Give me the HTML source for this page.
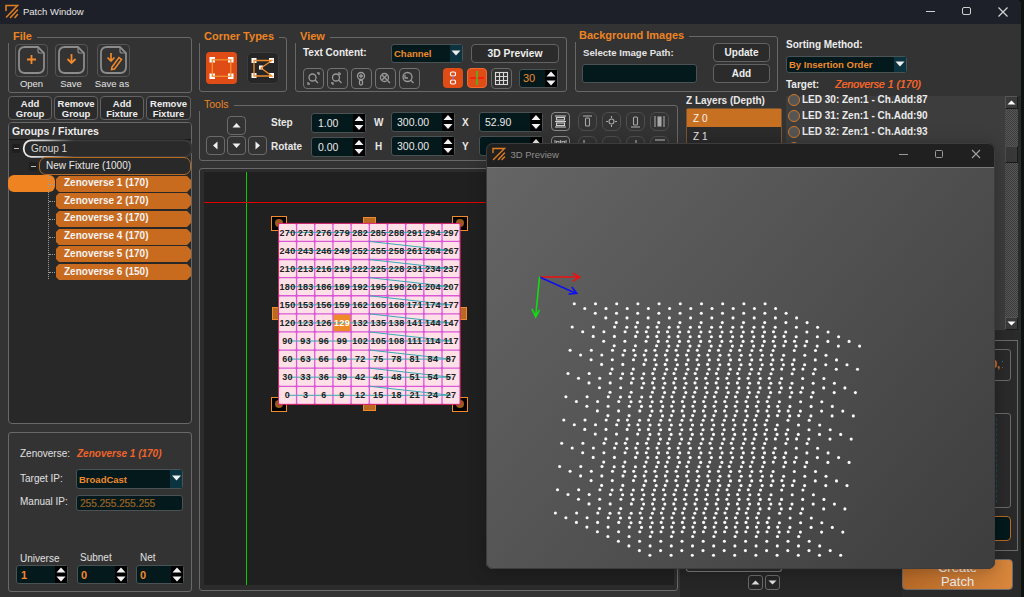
<!DOCTYPE html><html><head><meta charset="utf-8"><style>
html,body{margin:0;padding:0;width:1024px;height:597px;overflow:hidden;background:#0e1310;font-family:"Liberation Sans", sans-serif;}
.w{position:absolute;left:0;top:0;width:1021px;height:597px;background:#333;overflow:hidden;border-top-right-radius:5px;}
.lbl{font-weight:bold;color:#e8e8e8;font-size:11px;}
.gt{position:absolute;font-weight:bold;color:#ec8424;font-size:11px;background:#333;padding:0 5px;line-height:14px;}
.fr{position:absolute;border:1px solid #686868;border-radius:3px;box-sizing:border-box;}
.btn{position:absolute;box-sizing:border-box;border:1px solid #626262;border-radius:4px;background:#2b2b2b;color:#eee;font-weight:bold;font-size:9.5px;text-align:center;}
.inp{position:absolute;box-sizing:border-box;border:1px solid #4a5254;border-radius:3px;background:#03191c;}
</style></head><body>
<div class="w">
<div style="position:absolute;left:0px;top:0px;width:1021px;height:23.8px;background:#1e2029;"></div>
<svg style="position:absolute;left:0;top:0" width="30" height="24"><g stroke="#e07d22" stroke-width="1.6" fill="none" stroke-linecap="round"><path d="M6 10.5 V5.5 H17.5 L6.5 17"/><path d="M17.5 10 L10.5 17.5"/><path d="M17.5 14.5 L15 17.5"/></g></svg>
<div style="position:absolute;left:23px;top:6px;white-space:nowrap;color:#e6e6e6;font-size:9.5px;">Patch Window</div>
<div style="position:absolute;left:926px;top:11px;width:9px;height:1px;background:#d0d0d0;"></div>
<div style="position:absolute;left:962px;top:7px;width:9px;height:8px;border:1.3px solid #d0d0d0;border-radius:2px;box-sizing:border-box;"></div>
<svg style="position:absolute;left:997px;top:6px" width="12" height="12"><path d="M1.5 1.5 L10.5 10.5 M10.5 1.5 L1.5 10.5" stroke="#d6d6d6" stroke-width="1.2"/></svg>
<div class="fr" style="left:8px;top:37px;width:184px;height:56px;"></div>
<div class="gt" style="left:8px;top:29px;">File</div>
<div style="position:absolute;left:15px;top:44px;width:33px;height:33px;box-sizing:border-box;border:1px solid #555;border-radius:4px;"></div>
<svg style="position:absolute;left:15px;top:44px" width="33" height="33"><path d="M4 9 Q4 3 10 3 H23 L29 9 V23 Q29 29 23 29 H10 Q4 29 4 23 Z" stroke="#8c8c8c" stroke-width="1.8" fill="none"/><path d="M23 3 V7 Q23 9 25 9 H29" stroke="#8c8c8c" stroke-width="1.2" fill="none"/><path d="M16.5 11 V20 M12 15.5 H21" stroke="#f08a2c" stroke-width="1.8"/></svg>
<div style="position:absolute;left:-68.5px;width:200px;top:78px;text-align:center;white-space:nowrap;color:#e4e4e4;font-size:9.5px;">Open</div>
<div style="position:absolute;left:55px;top:44px;width:33px;height:33px;box-sizing:border-box;border:1px solid #555;border-radius:4px;"></div>
<svg style="position:absolute;left:55px;top:44px" width="33" height="33"><path d="M4 9 Q4 3 10 3 H23 L29 9 V23 Q29 29 23 29 H10 Q4 29 4 23 Z" stroke="#8c8c8c" stroke-width="1.8" fill="none"/><path d="M23 3 V7 Q23 9 25 9 H29" stroke="#8c8c8c" stroke-width="1.2" fill="none"/><path d="M16.5 10 V19 M12.5 15 L16.5 19 L20.5 15" stroke="#f08a2c" stroke-width="1.8" fill="none"/></svg>
<div style="position:absolute;left:-29px;width:200px;top:78px;text-align:center;white-space:nowrap;color:#e4e4e4;font-size:9.5px;">Save</div>
<div style="position:absolute;left:97px;top:44px;width:33px;height:33px;box-sizing:border-box;border:1px solid #555;border-radius:4px;"></div>
<svg style="position:absolute;left:97px;top:44px" width="33" height="33"><path d="M4 9 Q4 3 10 3 H23 L29 9 V23 Q29 29 23 29 H10 Q4 29 4 23 Z" stroke="#8c8c8c" stroke-width="1.8" fill="none"/><path d="M23 3 V7 Q23 9 25 9 H29" stroke="#8c8c8c" stroke-width="1.2" fill="none"/><path d="M14 9 V17 M10.5 13.5 L14 17 L17.5 13.5" stroke="#f08a2c" stroke-width="1.7" fill="none"/><path d="M15 23 L22 13.5 L24.5 15.5 L17.5 25 L14.5 25.5 Z" stroke="#f08a2c" stroke-width="1.5" fill="none"/></svg>
<div style="position:absolute;left:12px;width:200px;top:78px;text-align:center;white-space:nowrap;color:#e4e4e4;font-size:9.5px;">Save as</div>
<div class="btn" style="left:8px;top:96px;width:44px;height:24px;line-height:9.5px;padding-top:2px;">Add<br>Group</div>
<div class="btn" style="left:54px;top:96px;width:44px;height:24px;line-height:9.5px;padding-top:2px;">Remove<br>Group</div>
<div class="btn" style="left:100px;top:96px;width:44px;height:24px;line-height:9.5px;padding-top:2px;">Add<br>Fixture</div>
<div class="btn" style="left:146px;top:96px;width:45px;height:24px;line-height:9.5px;padding-top:2px;">Remove<br>Fixture</div>
<div style="position:absolute;left:8px;top:122px;width:184px;height:302px;box-sizing:border-box;border:1px solid #686868;border-radius:4px;background:#282828;overflow:hidden;">
<div style="position:absolute;left:0;top:0;width:184px;height:16px;background:#2f2f2f;border-bottom:1px solid #161616;"></div>
<div style="position:absolute;left:3px;top:2px;font-weight:bold;color:#ececec;font-size:10.5px;">Groups / Fixtures</div>
</div>
<div style="position:absolute;left:12px;top:144px;width:8px;height:9px;background:#1f1f1f;"></div>
<div style="position:absolute;left:14px;top:148px;width:5px;height:1px;background:#bdbdbd;"></div>
<svg style="position:absolute;left:22px;top:139px" width="170" height="19"><defs><linearGradient id="gg" x1="0" x2="1" y1="0" y2="0"><stop offset="0" stop-color="#ececec"/><stop offset="0.12" stop-color="#c8c8c8"/><stop offset="0.3" stop-color="#3c3c3c"/><stop offset="1" stop-color="#3a3a3a"/></linearGradient></defs><rect x="1.8" y="1.3" width="168" height="16.5" rx="7.5" fill="#2a2a2a" stroke="url(#gg)" stroke-width="1.8"/></svg>
<div style="position:absolute;left:31px;top:143px;white-space:nowrap;color:#d8d8d8;font-size:10px;">Group 1</div>
<div style="position:absolute;left:29px;top:162px;width:8px;height:9px;background:#1f1f1f;"></div>
<div style="position:absolute;left:31px;top:166px;width:5px;height:1px;background:#bdbdbd;"></div>
<div style="position:absolute;left:39px;top:157px;width:152px;height:18px;box-sizing:border-box;border:1.5px solid #b86a20;border-radius:7px;background:#292929;"></div>
<div style="position:absolute;left:46px;top:160px;white-space:nowrap;color:#e8e8e8;font-size:10px;">New Fixture (1000)</div>
<div style="position:absolute;left:8px;top:175px;width:47px;height:17px;background:#ef8322;border-radius:6px;"></div>
<div style="position:absolute;left:48px;top:175px;width:0;height:104px;border-left:1px dotted #9a9a9a;"></div>
<div style="position:absolute;left:49px;top:183.5px;width:6px;height:0;border-top:1px dotted #9a9a9a;"></div>
<svg style="position:absolute;left:56px;top:175.5px" width="135" height="16"><path d="M3 0 H131 L135 4 V12 L131 16 H3 L0 13 V3 Z" fill="#c96b1f"/></svg>
<div style="position:absolute;left:64px;top:177.0px;white-space:nowrap;color:#f4f4f4;font-size:10px;font-weight:bold;">Zenoverse 1 (170)</div>
<div style="position:absolute;left:49px;top:201.2px;width:6px;height:0;border-top:1px dotted #9a9a9a;"></div>
<svg style="position:absolute;left:56px;top:193.2px" width="135" height="16"><path d="M3 0 H131 L135 4 V12 L131 16 H3 L0 13 V3 Z" fill="#c96b1f"/></svg>
<div style="position:absolute;left:64px;top:194.7px;white-space:nowrap;color:#f4f4f4;font-size:10px;font-weight:bold;">Zenoverse 2 (170)</div>
<div style="position:absolute;left:49px;top:218.9px;width:6px;height:0;border-top:1px dotted #9a9a9a;"></div>
<svg style="position:absolute;left:56px;top:210.9px" width="135" height="16"><path d="M3 0 H131 L135 4 V12 L131 16 H3 L0 13 V3 Z" fill="#c96b1f"/></svg>
<div style="position:absolute;left:64px;top:212.4px;white-space:nowrap;color:#f4f4f4;font-size:10px;font-weight:bold;">Zenoverse 3 (170)</div>
<div style="position:absolute;left:49px;top:236.6px;width:6px;height:0;border-top:1px dotted #9a9a9a;"></div>
<svg style="position:absolute;left:56px;top:228.6px" width="135" height="16"><path d="M3 0 H131 L135 4 V12 L131 16 H3 L0 13 V3 Z" fill="#c96b1f"/></svg>
<div style="position:absolute;left:64px;top:230.1px;white-space:nowrap;color:#f4f4f4;font-size:10px;font-weight:bold;">Zenoverse 4 (170)</div>
<div style="position:absolute;left:49px;top:254.3px;width:6px;height:0;border-top:1px dotted #9a9a9a;"></div>
<svg style="position:absolute;left:56px;top:246.3px" width="135" height="16"><path d="M3 0 H131 L135 4 V12 L131 16 H3 L0 13 V3 Z" fill="#c96b1f"/></svg>
<div style="position:absolute;left:64px;top:247.8px;white-space:nowrap;color:#f4f4f4;font-size:10px;font-weight:bold;">Zenoverse 5 (170)</div>
<div style="position:absolute;left:49px;top:272.0px;width:6px;height:0;border-top:1px dotted #9a9a9a;"></div>
<svg style="position:absolute;left:56px;top:264.0px" width="135" height="16"><path d="M3 0 H131 L135 4 V12 L131 16 H3 L0 13 V3 Z" fill="#c96b1f"/></svg>
<div style="position:absolute;left:64px;top:265.5px;white-space:nowrap;color:#f4f4f4;font-size:10px;font-weight:bold;">Zenoverse 6 (150)</div>
<div class="fr" style="left:8px;top:432px;width:184px;height:160px;"></div>
<div style="position:absolute;left:20px;top:448px;white-space:nowrap;color:#e0e0e0;font-size:10px;">Zenoverse:</div>
<div style="position:absolute;left:77px;top:448px;white-space:nowrap;color:#f0642a;font-size:10px;font-weight:bold;font-style:italic;">Zenoverse 1 (170)</div>
<div style="position:absolute;left:20px;top:473px;white-space:nowrap;color:#e0e0e0;font-size:10px;">Target IP:</div>
<div class="inp" style="left:76px;top:469px;width:107px;height:20px;"></div>
<div style="position:absolute;left:170px;top:470px;width:12px;height:18px;background:#0b3440;"></div>
<svg style="position:absolute;left:171px;top:474px" width="11" height="8"><path d="M1 1.5 H10 L5.5 6.5 Z" fill="#f0f0f0"/></svg>
<div style="position:absolute;left:79px;top:474px;white-space:nowrap;color:#f08a2c;font-size:9.5px;font-weight:bold;">BroadCast</div>
<div style="position:absolute;left:20px;top:496px;white-space:nowrap;color:#e0e0e0;font-size:10px;">Manual IP:</div>
<div class="inp" style="left:76px;top:495px;width:107px;height:16px;"></div>
<div style="position:absolute;left:80px;top:498px;white-space:nowrap;color:#8a5a22;font-size:10px;text-shadow:0.3px 0 0 #8a5a22;">255.255.255.255</div>
<div style="position:absolute;left:20px;top:552.5px;white-space:nowrap;color:#e0e0e0;font-size:10px;">Universe</div>
<div style="position:absolute;left:80px;top:551.5px;white-space:nowrap;color:#e0e0e0;font-size:10px;">Subnet</div>
<div style="position:absolute;left:140px;top:551.5px;white-space:nowrap;color:#e0e0e0;font-size:10px;">Net</div>
<div class="inp" style="left:16px;top:565px;width:52px;height:19px;"></div>
<div style="position:absolute;left:55px;top:566px;width:12px;height:17px;background:#000;"></div>
<svg style="position:absolute;left:55px;top:565px" width="12" height="19"><path d="M1.5 7.5 L6.0 2.5 L10.5 7.5 Z M1.5 11.5 L6.0 16.5 L10.5 11.5 Z" fill="#f2f2f2"/></svg>
<div style="position:absolute;left:21px;top:567.5px;white-space:nowrap;color:#f08a2c;font-size:11px;font-weight:bold;line-height:14px;">1</div>
<div class="inp" style="left:77px;top:565px;width:51px;height:19px;"></div>
<div style="position:absolute;left:115px;top:566px;width:12px;height:17px;background:#000;"></div>
<svg style="position:absolute;left:115px;top:565px" width="12" height="19"><path d="M1.5 7.5 L6.0 2.5 L10.5 7.5 Z M1.5 11.5 L6.0 16.5 L10.5 11.5 Z" fill="#f2f2f2"/></svg>
<div style="position:absolute;left:81px;top:567.5px;white-space:nowrap;color:#f08a2c;font-size:11px;font-weight:bold;line-height:14px;">0</div>
<div class="inp" style="left:136px;top:565px;width:48px;height:19px;"></div>
<div style="position:absolute;left:171px;top:566px;width:12px;height:17px;background:#000;"></div>
<svg style="position:absolute;left:171px;top:565px" width="12" height="19"><path d="M1.5 7.5 L6.0 2.5 L10.5 7.5 Z M1.5 11.5 L6.0 16.5 L10.5 11.5 Z" fill="#f2f2f2"/></svg>
<div style="position:absolute;left:140px;top:567.5px;white-space:nowrap;color:#f08a2c;font-size:11px;font-weight:bold;line-height:14px;">0</div>
<div class="fr" style="left:199px;top:37px;width:88px;height:55px;"></div>
<div class="gt" style="left:199px;top:29px;">Corner Types</div>
<div style="position:absolute;left:206px;top:52px;width:31px;height:32px;background:#e04c16;border-radius:4px;"></div>
<svg style="position:absolute;left:206px;top:52px" width="31" height="32"><g fill="#fff"><rect x="3.5" y="5" width="5.5" height="5.5"/><rect x="22" y="5" width="5.5" height="5.5"/><rect x="3.5" y="21.5" width="5.5" height="5.5"/><rect x="22" y="21.5" width="5.5" height="5.5"/></g><rect x="6.3" y="7.8" width="18.5" height="16.5" fill="none" stroke="#f59032" stroke-width="1.3"/></svg>
<div style="position:absolute;left:247px;top:52px;width:32px;height:32px;background:#262626;border:1px solid #3c3c3c;border-radius:5px;box-sizing:border-box;"></div>
<svg style="position:absolute;left:247px;top:52px" width="32" height="32"><g fill="#fff"><rect x="4.5" y="6" width="5" height="5"/><rect x="22" y="6" width="5" height="5"/><rect x="4.5" y="21" width="5" height="5"/><rect x="22" y="21" width="5" height="5"/><rect x="12" y="13.5" width="4" height="4"/></g><path d="M7 8.5 H25 L14 16 L25 24 H7 Z" fill="none" stroke="#f08a2c" stroke-width="1.3"/></svg>
<div class="fr" style="left:295px;top:37px;width:272px;height:55px;"></div>
<div class="gt" style="left:295px;top:29px;">View</div>
<div style="position:absolute;left:303px;top:47px;white-space:nowrap;color:#ececec;font-size:10px;font-weight:bold;">Text Content:</div>
<div class="inp" style="left:391px;top:44px;width:72px;height:19px;"></div>
<div style="position:absolute;left:450px;top:45px;width:12px;height:17px;background:#0b3440;"></div>
<svg style="position:absolute;left:450px;top:49px" width="12" height="8"><path d="M1.5 1.5 H10.5 L6 6.5 Z" fill="#f0f0f0"/></svg>
<div style="position:absolute;left:394px;top:48px;white-space:nowrap;color:#f08a2c;font-size:9.5px;font-weight:bold;">Channel</div>
<div class="btn" style="left:471px;top:44px;width:88px;height:19px;font-size:10.3px;line-height:17px;">3D Preview</div>
<div style="position:absolute;left:303px;top:68px;width:21px;height:21px;box-sizing:border-box;border:1.2px solid #727272;border-radius:4px;"></div>
<div style="position:absolute;left:326.5px;top:68px;width:21px;height:21px;box-sizing:border-box;border:1.2px solid #727272;border-radius:4px;"></div>
<div style="position:absolute;left:350.5px;top:68px;width:21px;height:21px;box-sizing:border-box;border:1.2px solid #727272;border-radius:4px;"></div>
<div style="position:absolute;left:374.5px;top:68px;width:21px;height:21px;box-sizing:border-box;border:1.2px solid #727272;border-radius:4px;"></div>
<div style="position:absolute;left:398.5px;top:68px;width:21px;height:21px;box-sizing:border-box;border:1.2px solid #727272;border-radius:4px;"></div>
<svg style="position:absolute;left:303px;top:68px" width="120" height="21"><g stroke="#9a9a9a" stroke-width="1.3" fill="none"><circle cx="9.5" cy="9.5" r="3.5"/><path d="M12 12 L15 15"/><path d="M14 5 H16 V7 M5 14 V16 H7"/><circle cx="33" cy="9.5" r="3.5"/><path d="M35.5 12 L38.5 15"/><path d="M36 4 V6 H38 M28 15 H30 V17"/><circle cx="58" cy="8" r="3.5"/><path d="M56 8 H60 M58 6 V10"/><rect x="56.5" y="12" width="3" height="5" rx="1.5"/><circle cx="81.5" cy="9.5" r="4"/><path d="M79 7 L84 12 M84 7 L79 12 M84.5 12.5 L87 15"/><circle cx="104.5" cy="9" r="4.5"/><path d="M107.5 12 L110.5 15 M102 7 V10 H105"/></g></svg>
<div style="position:absolute;left:443px;top:68px;width:20px;height:20px;background:#e04c16;border-radius:4px;"></div>
<svg style="position:absolute;left:443px;top:68px" width="20" height="20"><g fill="none" stroke="#fff" stroke-width="1.2"><rect x="7.5" y="4" width="5" height="4" rx="1.5"/><rect x="7.5" y="12" width="5" height="4" rx="1.5"/></g><path d="M10 8 V12" stroke="#9070c0" stroke-width="1.2"/></svg>
<div style="position:absolute;left:467px;top:68px;width:20px;height:20px;background:#e04c16;border-radius:4px;border:1px solid #f06a30;box-sizing:border-box;"></div>
<svg style="position:absolute;left:467px;top:68px" width="20" height="20"><path d="M3 10 H17" stroke="#ff1010" stroke-width="1.5"/><path d="M10 3 V17" stroke="#40c020" stroke-width="1.5"/></svg>
<div style="position:absolute;left:490.5px;top:68px;width:21px;height:21px;box-sizing:border-box;border:1px solid #686868;border-radius:4px;"></div>
<svg style="position:absolute;left:490.5px;top:68px" width="21" height="21"><g stroke="#d8d8d8" stroke-width="1.1" fill="none"><rect x="4.5" y="4.5" width="12" height="12"/><path d="M8.5 4.5 V16.5 M12.5 4.5 V16.5 M4.5 8.5 H16.5 M4.5 12.5 H16.5"/></g></svg>
<div class="inp" style="left:519px;top:68.5px;width:39px;height:19px;"></div>
<div style="position:absolute;left:545px;top:69.5px;width:12px;height:17px;background:#000;"></div>
<svg style="position:absolute;left:545px;top:68.5px" width="12" height="19"><path d="M1.5 7.5 L6.0 2.5 L10.5 7.5 Z M1.5 11.5 L6.0 16.5 L10.5 11.5 Z" fill="#f2f2f2"/></svg>
<div style="position:absolute;left:523px;top:71.0px;white-space:nowrap;color:#f08a2c;font-size:11px;line-height:14px;">30</div>
<div class="fr" style="left:575px;top:36px;width:203px;height:56px;"></div>
<div class="gt" style="left:574px;top:28px;">Background Images</div>
<div style="position:absolute;left:583px;top:47px;white-space:nowrap;color:#e4e4e4;font-size:9.6px;font-weight:bold;">Selecte Image Path:</div>
<div class="inp" style="left:582px;top:64px;width:115px;height:19px;"></div>
<div class="btn" style="left:713px;top:42.5px;width:57px;height:19px;font-size:10px;line-height:17px;">Update</div>
<div class="btn" style="left:713px;top:64px;width:57px;height:19px;font-size:10px;line-height:17px;">Add</div>
<div style="position:absolute;left:786px;top:39px;white-space:nowrap;color:#ececec;font-size:10px;font-weight:bold;">Sorting Method:</div>
<div class="inp" style="left:786px;top:56px;width:121px;height:17px;"></div>
<div style="position:absolute;left:894px;top:57px;width:12px;height:15px;background:#0b3440;"></div>
<svg style="position:absolute;left:894px;top:60px" width="12" height="8"><path d="M1.5 1.5 H10.5 L6 6.5 Z" fill="#f0f0f0"/></svg>
<div style="position:absolute;left:789px;top:59px;white-space:nowrap;color:#f08a2c;font-size:9.5px;font-weight:bold;">By Insertion Order</div>
<div style="position:absolute;left:786px;top:79px;white-space:nowrap;color:#ececec;font-size:10px;font-weight:bold;">Target:</div>
<div style="position:absolute;left:835px;top:78px;white-space:nowrap;color:#f2652a;font-size:10.5px;font-style:italic;text-shadow:0.35px 0 0 #f2652a;">Zenoverse 1 (170)</div>
<div style="position:absolute;left:786px;top:96px;width:219px;height:234px;background:#3d3d3d;"></div>
<div style="position:absolute;left:788px;top:93.8px;width:12px;height:12px;box-sizing:border-box;border:1.4px solid #d07828;border-radius:50%;background:#555;"></div>
<div style="position:absolute;left:802px;top:92.8px;white-space:nowrap;color:#ececec;font-size:10px;font-weight:bold;line-height:14px;">LED 30: Zen:1 - Ch.Add:87</div>
<div style="position:absolute;left:788px;top:109.7px;width:12px;height:12px;box-sizing:border-box;border:1.4px solid #d07828;border-radius:50%;background:#555;"></div>
<div style="position:absolute;left:802px;top:108.7px;white-space:nowrap;color:#ececec;font-size:10px;font-weight:bold;line-height:14px;">LED 31: Zen:1 - Ch.Add:90</div>
<div style="position:absolute;left:788px;top:125.6px;width:12px;height:12px;box-sizing:border-box;border:1.4px solid #d07828;border-radius:50%;background:#555;"></div>
<div style="position:absolute;left:802px;top:124.6px;white-space:nowrap;color:#ececec;font-size:10px;font-weight:bold;line-height:14px;">LED 32: Zen:1 - Ch.Add:93</div>
<div style="position:absolute;left:788px;top:141.5px;width:12px;height:12px;box-sizing:border-box;border:1.4px solid #d07828;border-radius:50%;background:#555;"></div>
<div style="position:absolute;left:802px;top:140.5px;white-space:nowrap;color:#ececec;font-size:10px;font-weight:bold;line-height:14px;"></div>
<div style="position:absolute;left:1005px;top:96px;width:13px;height:234px;background:repeating-conic-gradient(#3c3c3c 0 25%,#585858 0 50%) 0 0/2px 2px;"></div>
<div style="position:absolute;left:1018px;top:96px;width:3px;height:234px;background:#2a2a2a;"></div>
<div style="position:absolute;left:1005px;top:96px;width:13px;height:12.5px;background:#3a3a3a;border:1px solid;border-color:#555 #1a1a1a #1a1a1a #555;box-sizing:border-box;"></div>
<svg style="position:absolute;left:1005px;top:96px" width="13" height="13"><path d="M2.5 8.5 H10.5 L6.5 4.5 Z" fill="#fff"/></svg>
<div style="position:absolute;left:1005px;top:145.5px;width:13px;height:17px;background:#383838;border:1px solid;border-color:#4e4e4e #1a1a1a #1a1a1a #4e4e4e;box-sizing:border-box;"></div>
<div style="position:absolute;left:1005px;top:317px;width:13px;height:13px;background:#3a3a3a;border:1px solid;border-color:#555 #1a1a1a #1a1a1a #555;box-sizing:border-box;"></div>
<svg style="position:absolute;left:1005px;top:317px" width="13" height="13"><path d="M2.5 4.5 H10.5 L6.5 8.5 Z" fill="#fff"/></svg>
<div class="fr" style="left:199px;top:104.5px;width:479px;height:56px;"></div>
<div class="gt" style="left:199px;top:97px;font-weight:normal;font-size:10.5px;">Tools</div>
<div style="position:absolute;left:227px;top:116px;width:19px;height:19px;box-sizing:border-box;border:1px solid #6a6a6a;border-radius:4px;"></div>
<svg style="position:absolute;left:227px;top:116px" width="19" height="19"><path d="M5.5 11.5 H13.5 L9.5 7 Z" fill="#f0f0f0"/></svg>
<div style="position:absolute;left:206px;top:136px;width:19px;height:19px;box-sizing:border-box;border:1px solid #6a6a6a;border-radius:4px;"></div>
<svg style="position:absolute;left:206px;top:136px" width="19" height="19"><path d="M11.5 5.5 V13.5 L7 9.5 Z" fill="#f0f0f0"/></svg>
<div style="position:absolute;left:227px;top:136px;width:19px;height:19px;box-sizing:border-box;border:1px solid #6a6a6a;border-radius:4px;"></div>
<svg style="position:absolute;left:227px;top:136px" width="19" height="19"><path d="M5.5 7.5 H13.5 L9.5 12 Z" fill="#f0f0f0"/></svg>
<div style="position:absolute;left:248px;top:136px;width:19px;height:19px;box-sizing:border-box;border:1px solid #6a6a6a;border-radius:4px;"></div>
<svg style="position:absolute;left:248px;top:136px" width="19" height="19"><path d="M7.5 5.5 V13.5 L12 9.5 Z" fill="#f0f0f0"/></svg>
<div style="position:absolute;left:271px;top:117px;white-space:nowrap;color:#e8e8e8;font-size:10px;font-weight:bold;">Step</div>
<div style="position:absolute;left:271px;top:141px;white-space:nowrap;color:#e8e8e8;font-size:10px;font-weight:bold;">Rotate</div>
<div class="inp" style="left:311px;top:112.5px;width:55px;height:20px;"></div>
<div style="position:absolute;left:353px;top:113.5px;width:12px;height:18px;background:#000;"></div>
<svg style="position:absolute;left:353px;top:112.5px" width="12" height="20"><path d="M1.5 8.0 L6.0 3.0 L10.5 8.0 Z M1.5 12.0 L6.0 17.0 L10.5 12.0 Z" fill="#f2f2f2"/></svg>
<div style="position:absolute;left:318px;top:115.5px;white-space:nowrap;color:#eaeaea;font-size:10.5px;line-height:14px;">1.00</div>
<div class="inp" style="left:311px;top:136.5px;width:55px;height:20px;"></div>
<div style="position:absolute;left:353px;top:137.5px;width:12px;height:18px;background:#000;"></div>
<svg style="position:absolute;left:353px;top:136.5px" width="12" height="20"><path d="M1.5 8.0 L6.0 3.0 L10.5 8.0 Z M1.5 12.0 L6.0 17.0 L10.5 12.0 Z" fill="#f2f2f2"/></svg>
<div style="position:absolute;left:318px;top:139.5px;white-space:nowrap;color:#eaeaea;font-size:10.5px;line-height:14px;">0.00</div>
<div style="position:absolute;left:374px;top:117px;white-space:nowrap;color:#e8e8e8;font-size:10px;font-weight:bold;">W</div>
<div style="position:absolute;left:375px;top:141px;white-space:nowrap;color:#e8e8e8;font-size:10px;font-weight:bold;">H</div>
<div class="inp" style="left:391px;top:112px;width:64px;height:20px;"></div>
<div style="position:absolute;left:442px;top:113px;width:12px;height:18px;background:#000;"></div>
<svg style="position:absolute;left:442px;top:112px" width="12" height="20"><path d="M1.5 8.0 L6.0 3.0 L10.5 8.0 Z M1.5 12.0 L6.0 17.0 L10.5 12.0 Z" fill="#f2f2f2"/></svg>
<div style="position:absolute;left:397px;top:115.0px;white-space:nowrap;color:#eaeaea;font-size:10.5px;line-height:14px;">300.00</div>
<div class="inp" style="left:391px;top:136px;width:64px;height:20px;"></div>
<div style="position:absolute;left:442px;top:137px;width:12px;height:18px;background:#000;"></div>
<svg style="position:absolute;left:442px;top:136px" width="12" height="20"><path d="M1.5 8.0 L6.0 3.0 L10.5 8.0 Z M1.5 12.0 L6.0 17.0 L10.5 12.0 Z" fill="#f2f2f2"/></svg>
<div style="position:absolute;left:397px;top:139.0px;white-space:nowrap;color:#eaeaea;font-size:10.5px;line-height:14px;">300.00</div>
<div style="position:absolute;left:462px;top:117px;white-space:nowrap;color:#e8e8e8;font-size:10px;font-weight:bold;">X</div>
<div style="position:absolute;left:462px;top:141px;white-space:nowrap;color:#e8e8e8;font-size:10px;font-weight:bold;">Y</div>
<div class="inp" style="left:478.5px;top:112px;width:64px;height:20px;"></div>
<div style="position:absolute;left:529.5px;top:113px;width:12px;height:18px;background:#000;"></div>
<svg style="position:absolute;left:529.5px;top:112px" width="12" height="20"><path d="M1.5 8.0 L6.0 3.0 L10.5 8.0 Z M1.5 12.0 L6.0 17.0 L10.5 12.0 Z" fill="#f2f2f2"/></svg>
<div style="position:absolute;left:485px;top:115.0px;white-space:nowrap;color:#eaeaea;font-size:10.5px;line-height:14px;">52.90</div>
<div class="inp" style="left:478.5px;top:136px;width:64px;height:20px;"></div>
<div style="position:absolute;left:529.5px;top:137px;width:12px;height:18px;background:#000;"></div>
<svg style="position:absolute;left:529.5px;top:136px" width="12" height="20"><path d="M1.5 8.0 L6.0 3.0 L10.5 8.0 Z M1.5 12.0 L6.0 17.0 L10.5 12.0 Z" fill="#f2f2f2"/></svg>
<div style="position:absolute;left:485px;top:139.0px;white-space:nowrap;color:#eaeaea;font-size:11px;line-height:14px;"></div>
<div style="position:absolute;left:550.5px;top:112px;width:19px;height:19px;box-sizing:border-box;border:1.5px solid #8a8a8a;border-radius:4px;"></div>
<svg style="position:absolute;left:550.5px;top:112px" width="19" height="19"><g stroke="#cfcfcf" stroke-width="1.1" fill="none"><path d="M4 4 H15 M4 15 H15 M4 9.5 H15"/><rect x="5.5" y="5.5" width="8" height="2.5"/><rect x="5.5" y="11" width="8" height="2.5"/></g></svg>
<div style="position:absolute;left:577.5px;top:112px;width:19px;height:19px;box-sizing:border-box;border:1px solid #4e4e4e;border-radius:6px;"></div>
<div style="position:absolute;left:601.5px;top:112px;width:19px;height:19px;box-sizing:border-box;border:1px solid #4e4e4e;border-radius:6px;"></div>
<div style="position:absolute;left:625.5px;top:112px;width:19px;height:19px;box-sizing:border-box;border:1px solid #4e4e4e;border-radius:6px;"></div>
<div style="position:absolute;left:649.5px;top:112px;width:19px;height:19px;box-sizing:border-box;border:1px solid #4e4e4e;border-radius:6px;"></div>
<svg style="position:absolute;left:577.5px;top:112px" width="92" height="19"><g stroke="#a8a8a8" stroke-width="1.1" fill="none"><path d="M5 4 H14"/><rect x="7.5" y="6" width="4" height="8" rx="1"/><circle cx="33.5" cy="9.5" r="2.5"/><path d="M33.5 4 V6 M33.5 13 V15 M28 9.5 H30 M37 9.5 H39"/><path d="M53 15 H62"/><rect x="55.5" y="5" width="4" height="8" rx="1"/><path d="M77 4 V15 M86 4 V15"/><rect x="80" y="5" width="3" height="9" fill="#a8a8a8"/></g></svg>
<div style="position:absolute;left:550.5px;top:136px;width:19px;height:19px;box-sizing:border-box;border:1.5px solid #8a8a8a;border-radius:4px;"></div>
<div style="position:absolute;left:577.5px;top:136px;width:19px;height:19px;box-sizing:border-box;border:1px solid #4e4e4e;border-radius:6px;"></div>
<div style="position:absolute;left:601.5px;top:136px;width:19px;height:19px;box-sizing:border-box;border:1px solid #4e4e4e;border-radius:6px;"></div>
<div style="position:absolute;left:625.5px;top:136px;width:19px;height:19px;box-sizing:border-box;border:1px solid #4e4e4e;border-radius:6px;"></div>
<div style="position:absolute;left:649.5px;top:136px;width:19px;height:19px;box-sizing:border-box;border:1px solid #4e4e4e;border-radius:6px;"></div>
<svg style="position:absolute;left:550.5px;top:136px" width="119" height="19"><g stroke="#b8b8b8" stroke-width="1.1" fill="none"><path d="M4 4 V15 M15 4 V15 M9.5 4 V15"/><rect x="5.5" y="5.5" width="2.5" height="8"/><rect x="11" y="5.5" width="2.5" height="8"/><path d="M33 4 V15"/><circle cx="60.5" cy="9.5" r="1"/><path d="M85 4 V15"/><path d="M104 4 H114"/></g></svg>
<div style="position:absolute;left:680px;top:330px;width:341px;height:267px;background:#2a2a2a;"></div>
<div style="position:absolute;left:686px;top:95px;white-space:nowrap;color:#e8e8e8;font-size:10px;font-weight:bold;">Z Layers (Depth)</div>
<div style="position:absolute;left:686px;top:108px;width:96px;height:464px;box-sizing:border-box;border:1px solid #7a5430;background:#2b2b2b;border-radius:2px;"></div>
<div style="position:absolute;left:687px;top:109px;width:94px;height:18px;background:#c87022;"></div>
<div style="position:absolute;left:693px;top:112.5px;white-space:nowrap;color:#f4f4f4;font-size:10px;">Z 0</div>
<div style="position:absolute;left:693px;top:130.5px;white-space:nowrap;color:#e8e8e8;font-size:10px;">Z 1</div>
<div style="position:absolute;left:680px;top:570px;width:222px;height:27px;background:#262626;"></div>
<div style="position:absolute;left:686px;top:555px;width:96px;height:17px;box-sizing:border-box;border:1px solid #7a7a7a;border-top:none;border-radius:0 0 3px 3px;background:#2b2b2b;"></div>
<div style="position:absolute;left:748px;top:574.5px;width:15px;height:15px;box-sizing:border-box;border:1px solid #6a6a6a;border-radius:3px;"></div>
<svg style="position:absolute;left:748px;top:574.5px" width="15" height="15"><path d="M3.5 9.5 H11.5 L7.5 5.5 Z" fill="#e0e0e0"/></svg>
<div style="position:absolute;left:765px;top:574.5px;width:15px;height:15px;box-sizing:border-box;border:1px solid #6a6a6a;border-radius:3px;"></div>
<svg style="position:absolute;left:765px;top:574.5px" width="15" height="15"><path d="M3.5 5.5 H11.5 L7.5 9.5 Z" fill="#e0e0e0"/></svg>
<div style="position:absolute;left:786px;top:340px;width:232px;height:211px;box-sizing:border-box;border:1px solid #6a6a6a;border-left:none;"></div>
<div style="position:absolute;left:900px;top:348.5px;width:110.5px;height:32px;box-sizing:border-box;border:1px solid #6a6a6a;border-radius:3px;"></div>
<div style="position:absolute;left:900px;top:412.5px;width:110.5px;height:95px;box-sizing:border-box;border:1px solid #6a6a6a;border-radius:3px;"></div>
<div style="position:absolute;left:991px;top:358px;white-space:nowrap;color:#d08030;font-size:11px;font-weight:bold;">0,</div>
<div style="position:absolute;left:1002px;top:361px;width:1.2px;height:1.2px;background:#3a6a90;"></div>
<div style="position:absolute;left:1002px;top:367px;width:1.2px;height:1.2px;background:#3a6a90;"></div>
<div style="position:absolute;left:995.5px;top:418px;width:0;height:85px;border-left:1.5px dashed #1d4a5a;"></div>
<div style="position:absolute;left:900px;top:515.5px;width:110.5px;height:25px;box-sizing:border-box;border:1.3px solid #b86a20;border-radius:4px;background:#03191c;"></div>
<div style="position:absolute;left:902px;top:558.5px;width:111px;height:31px;box-sizing:border-box;border:1.5px solid #6a6a6a;border-radius:4px;background:linear-gradient(90deg,#b86a28,#d8863c);color:#eee;font-size:13px;text-align:center;line-height:14px;padding-top:1px;">Create<br>Patch</div>
<div style="position:absolute;left:199px;top:167.5px;width:478.5px;height:423px;box-sizing:border-box;border:1px solid #6a6a6a;border-radius:3px;background:#2c2c2c;"></div>
<div style="position:absolute;left:203.5px;top:172px;width:470px;height:413px;background:#202020;"></div>
<div style="position:absolute;left:246px;top:172px;width:1.3px;height:413px;background:#00d000;"></div>
<div style="position:absolute;left:203.5px;top:202px;width:470px;height:1.2px;background:#e00000;"></div>
<div style="position:absolute;left:271.3px;top:215.5px;width:15.5px;height:15.5px;box-sizing:border-box;border:1.6px solid #f08a2c;background:#000;"></div>
<div style="position:absolute;left:274.8px;top:219.0px;width:8px;height:8px;background:#9a5a1c;border-radius:50%;"></div>
<div style="position:absolute;left:452px;top:215.5px;width:15.5px;height:15.5px;box-sizing:border-box;border:1.6px solid #f08a2c;background:#000;"></div>
<div style="position:absolute;left:455.5px;top:219.0px;width:8px;height:8px;background:#9a5a1c;border-radius:50%;"></div>
<div style="position:absolute;left:271.3px;top:396.5px;width:15.5px;height:15.5px;box-sizing:border-box;border:1.6px solid #f08a2c;background:#000;"></div>
<div style="position:absolute;left:274.8px;top:400.0px;width:8px;height:8px;background:#9a5a1c;border-radius:50%;"></div>
<div style="position:absolute;left:452px;top:396.5px;width:15.5px;height:15.5px;box-sizing:border-box;border:1.6px solid #f08a2c;background:#000;"></div>
<div style="position:absolute;left:455.5px;top:400.0px;width:8px;height:8px;background:#9a5a1c;border-radius:50%;"></div>
<div style="position:absolute;left:362.8px;top:217.3px;width:13px;height:8px;background:#b86a22;border:1.3px solid #f08a2c;box-sizing:border-box;"></div>
<div style="position:absolute;left:362.8px;top:402px;width:13px;height:8.5px;background:#b86a22;border:1.3px solid #f08a2c;box-sizing:border-box;"></div>
<div style="position:absolute;left:272px;top:307px;width:8px;height:12.5px;background:#b86a22;border:1.3px solid #f08a2c;box-sizing:border-box;"></div>
<div style="position:absolute;left:458.5px;top:307px;width:8px;height:12.5px;background:#b86a22;border:1.3px solid #f08a2c;box-sizing:border-box;"></div>
<svg style="position:absolute;left:0;top:0" width="1021" height="597"><rect x="278.4" y="223.3" width="181.8" height="181.1" fill="#d858d8"/><rect x="279.05" y="223.95" width="16.88" height="16.81" rx="1" fill="#ffe0e6"/><rect x="297.23" y="223.95" width="16.88" height="16.81" rx="1" fill="#ffe0e6"/><rect x="315.41" y="223.95" width="16.88" height="16.81" rx="1" fill="#ffe0e6"/><rect x="333.59" y="223.95" width="16.88" height="16.81" rx="1" fill="#ffe0e6"/><rect x="351.77" y="223.95" width="16.88" height="16.81" rx="1" fill="#ffe0e6"/><rect x="369.95" y="223.95" width="16.88" height="16.81" rx="1" fill="#ffe0e6"/><rect x="388.13" y="223.95" width="16.88" height="16.81" rx="1" fill="#ffe0e6"/><rect x="406.31" y="223.95" width="16.88" height="16.81" rx="1" fill="#ffe0e6"/><rect x="424.49" y="223.95" width="16.88" height="16.81" rx="1" fill="#ffe0e6"/><rect x="442.67" y="223.95" width="16.88" height="16.81" rx="1" fill="#ffe0e6"/><rect x="279.05" y="242.06" width="16.88" height="16.81" rx="1" fill="#ffe0e6"/><rect x="297.23" y="242.06" width="16.88" height="16.81" rx="1" fill="#ffe0e6"/><rect x="315.41" y="242.06" width="16.88" height="16.81" rx="1" fill="#ffe0e6"/><rect x="333.59" y="242.06" width="16.88" height="16.81" rx="1" fill="#ffe0e6"/><rect x="351.77" y="242.06" width="16.88" height="16.81" rx="1" fill="#ffe0e6"/><rect x="369.95" y="242.06" width="16.88" height="16.81" rx="1" fill="#ffe0e6"/><rect x="388.13" y="242.06" width="16.88" height="16.81" rx="1" fill="#ffe0e6"/><rect x="406.31" y="242.06" width="16.88" height="16.81" rx="1" fill="#ffe0e6"/><rect x="424.49" y="242.06" width="16.88" height="16.81" rx="1" fill="#ffe0e6"/><rect x="442.67" y="242.06" width="16.88" height="16.81" rx="1" fill="#ffe0e6"/><rect x="279.05" y="260.17" width="16.88" height="16.81" rx="1" fill="#ffe0e6"/><rect x="297.23" y="260.17" width="16.88" height="16.81" rx="1" fill="#ffe0e6"/><rect x="315.41" y="260.17" width="16.88" height="16.81" rx="1" fill="#ffe0e6"/><rect x="333.59" y="260.17" width="16.88" height="16.81" rx="1" fill="#ffe0e6"/><rect x="351.77" y="260.17" width="16.88" height="16.81" rx="1" fill="#ffe0e6"/><rect x="369.95" y="260.17" width="16.88" height="16.81" rx="1" fill="#ffe0e6"/><rect x="388.13" y="260.17" width="16.88" height="16.81" rx="1" fill="#ffe0e6"/><rect x="406.31" y="260.17" width="16.88" height="16.81" rx="1" fill="#ffe0e6"/><rect x="424.49" y="260.17" width="16.88" height="16.81" rx="1" fill="#ffe0e6"/><rect x="442.67" y="260.17" width="16.88" height="16.81" rx="1" fill="#ffe0e6"/><rect x="279.05" y="278.28" width="16.88" height="16.81" rx="1" fill="#ffe0e6"/><rect x="297.23" y="278.28" width="16.88" height="16.81" rx="1" fill="#ffe0e6"/><rect x="315.41" y="278.28" width="16.88" height="16.81" rx="1" fill="#ffe0e6"/><rect x="333.59" y="278.28" width="16.88" height="16.81" rx="1" fill="#ffe0e6"/><rect x="351.77" y="278.28" width="16.88" height="16.81" rx="1" fill="#ffe0e6"/><rect x="369.95" y="278.28" width="16.88" height="16.81" rx="1" fill="#ffe0e6"/><rect x="388.13" y="278.28" width="16.88" height="16.81" rx="1" fill="#ffe0e6"/><rect x="406.31" y="278.28" width="16.88" height="16.81" rx="1" fill="#ffe0e6"/><rect x="424.49" y="278.28" width="16.88" height="16.81" rx="1" fill="#ffe0e6"/><rect x="442.67" y="278.28" width="16.88" height="16.81" rx="1" fill="#ffe0e6"/><rect x="279.05" y="296.39" width="16.88" height="16.81" rx="1" fill="#ffe0e6"/><rect x="297.23" y="296.39" width="16.88" height="16.81" rx="1" fill="#ffe0e6"/><rect x="315.41" y="296.39" width="16.88" height="16.81" rx="1" fill="#ffe0e6"/><rect x="333.59" y="296.39" width="16.88" height="16.81" rx="1" fill="#ffe0e6"/><rect x="351.77" y="296.39" width="16.88" height="16.81" rx="1" fill="#ffe0e6"/><rect x="369.95" y="296.39" width="16.88" height="16.81" rx="1" fill="#ffe0e6"/><rect x="388.13" y="296.39" width="16.88" height="16.81" rx="1" fill="#ffe0e6"/><rect x="406.31" y="296.39" width="16.88" height="16.81" rx="1" fill="#ffe0e6"/><rect x="424.49" y="296.39" width="16.88" height="16.81" rx="1" fill="#ffe0e6"/><rect x="442.67" y="296.39" width="16.88" height="16.81" rx="1" fill="#ffe0e6"/><rect x="279.05" y="314.50" width="16.88" height="16.81" rx="1" fill="#ffe0e6"/><rect x="297.23" y="314.50" width="16.88" height="16.81" rx="1" fill="#ffe0e6"/><rect x="315.41" y="314.50" width="16.88" height="16.81" rx="1" fill="#ffe0e6"/><rect x="333.59" y="314.50" width="16.88" height="16.81" rx="1" fill="#ef8a28"/><rect x="351.77" y="314.50" width="16.88" height="16.81" rx="1" fill="#ffe0e6"/><rect x="369.95" y="314.50" width="16.88" height="16.81" rx="1" fill="#ffe0e6"/><rect x="388.13" y="314.50" width="16.88" height="16.81" rx="1" fill="#ffe0e6"/><rect x="406.31" y="314.50" width="16.88" height="16.81" rx="1" fill="#ffe0e6"/><rect x="424.49" y="314.50" width="16.88" height="16.81" rx="1" fill="#ffe0e6"/><rect x="442.67" y="314.50" width="16.88" height="16.81" rx="1" fill="#ffe0e6"/><rect x="279.05" y="332.61" width="16.88" height="16.81" rx="1" fill="#ffe0e6"/><rect x="297.23" y="332.61" width="16.88" height="16.81" rx="1" fill="#ffe0e6"/><rect x="315.41" y="332.61" width="16.88" height="16.81" rx="1" fill="#ffe0e6"/><rect x="333.59" y="332.61" width="16.88" height="16.81" rx="1" fill="#ffe0e6"/><rect x="351.77" y="332.61" width="16.88" height="16.81" rx="1" fill="#ffe0e6"/><rect x="369.95" y="332.61" width="16.88" height="16.81" rx="1" fill="#ffe0e6"/><rect x="388.13" y="332.61" width="16.88" height="16.81" rx="1" fill="#ffe0e6"/><rect x="406.31" y="332.61" width="16.88" height="16.81" rx="1" fill="#ffe0e6"/><rect x="424.49" y="332.61" width="16.88" height="16.81" rx="1" fill="#ffe0e6"/><rect x="442.67" y="332.61" width="16.88" height="16.81" rx="1" fill="#ffe0e6"/><rect x="279.05" y="350.72" width="16.88" height="16.81" rx="1" fill="#ffe0e6"/><rect x="297.23" y="350.72" width="16.88" height="16.81" rx="1" fill="#ffe0e6"/><rect x="315.41" y="350.72" width="16.88" height="16.81" rx="1" fill="#ffe0e6"/><rect x="333.59" y="350.72" width="16.88" height="16.81" rx="1" fill="#ffe0e6"/><rect x="351.77" y="350.72" width="16.88" height="16.81" rx="1" fill="#ffe0e6"/><rect x="369.95" y="350.72" width="16.88" height="16.81" rx="1" fill="#ffe0e6"/><rect x="388.13" y="350.72" width="16.88" height="16.81" rx="1" fill="#ffe0e6"/><rect x="406.31" y="350.72" width="16.88" height="16.81" rx="1" fill="#ffe0e6"/><rect x="424.49" y="350.72" width="16.88" height="16.81" rx="1" fill="#ffe0e6"/><rect x="442.67" y="350.72" width="16.88" height="16.81" rx="1" fill="#ffe0e6"/><rect x="279.05" y="368.83" width="16.88" height="16.81" rx="1" fill="#ffe0e6"/><rect x="297.23" y="368.83" width="16.88" height="16.81" rx="1" fill="#ffe0e6"/><rect x="315.41" y="368.83" width="16.88" height="16.81" rx="1" fill="#ffe0e6"/><rect x="333.59" y="368.83" width="16.88" height="16.81" rx="1" fill="#ffe0e6"/><rect x="351.77" y="368.83" width="16.88" height="16.81" rx="1" fill="#ffe0e6"/><rect x="369.95" y="368.83" width="16.88" height="16.81" rx="1" fill="#ffe0e6"/><rect x="388.13" y="368.83" width="16.88" height="16.81" rx="1" fill="#ffe0e6"/><rect x="406.31" y="368.83" width="16.88" height="16.81" rx="1" fill="#ffe0e6"/><rect x="424.49" y="368.83" width="16.88" height="16.81" rx="1" fill="#ffe0e6"/><rect x="442.67" y="368.83" width="16.88" height="16.81" rx="1" fill="#ffe0e6"/><rect x="279.05" y="386.94" width="16.88" height="16.81" rx="1" fill="#ffe0e6"/><rect x="297.23" y="386.94" width="16.88" height="16.81" rx="1" fill="#ffe0e6"/><rect x="315.41" y="386.94" width="16.88" height="16.81" rx="1" fill="#ffe0e6"/><rect x="333.59" y="386.94" width="16.88" height="16.81" rx="1" fill="#ffe0e6"/><rect x="351.77" y="386.94" width="16.88" height="16.81" rx="1" fill="#ffe0e6"/><rect x="369.95" y="386.94" width="16.88" height="16.81" rx="1" fill="#ffe0e6"/><rect x="388.13" y="386.94" width="16.88" height="16.81" rx="1" fill="#ffe0e6"/><rect x="406.31" y="386.94" width="16.88" height="16.81" rx="1" fill="#ffe0e6"/><rect x="424.49" y="386.94" width="16.88" height="16.81" rx="1" fill="#ffe0e6"/><rect x="442.67" y="386.94" width="16.88" height="16.81" rx="1" fill="#ffe0e6"/><path d="M287.5 395.3 H451.1 M287.5 377.2 H451.1 M287.5 359.1 H451.1 M287.5 341.0 H451.1 M287.5 322.9 H451.1 M287.5 304.8 H451.1 M287.5 286.7 H451.1 M287.5 268.6 H451.1 M287.5 250.5 H451.1 M287.5 232.4 H451.1" stroke="#3aa8b4" stroke-width="1" fill="none"/><clipPath id="cp"><rect x="369.29999999999995" y="223.3" width="90.9" height="181.1"/></clipPath><path clip-path="url(#cp)" d="M451.1 395.3 L287.5 377.2 M451.1 377.2 L287.5 359.1 M451.1 359.1 L287.5 341.0 M451.1 341.0 L287.5 322.9 M451.1 322.9 L287.5 304.8 M451.1 304.8 L287.5 286.7 M451.1 286.7 L287.5 268.6 M451.1 268.6 L287.5 250.5 M451.1 250.5 L287.5 232.4" stroke="#3aa8b4" stroke-width="1" fill="none"/><rect x="278.4" y="223.3" width="181.8" height="181.1" fill="none" stroke="#e02060" stroke-width="0.8"/></svg>
<div style="position:absolute;left:273.40px;top:226.50px;width:28.18px;text-align:center;font-size:9px;font-weight:bold;color:#222;line-height:12px;letter-spacing:0.3px;">270</div>
<div style="position:absolute;left:291.58px;top:226.50px;width:28.18px;text-align:center;font-size:9px;font-weight:bold;color:#222;line-height:12px;letter-spacing:0.3px;">273</div>
<div style="position:absolute;left:309.76px;top:226.50px;width:28.18px;text-align:center;font-size:9px;font-weight:bold;color:#222;line-height:12px;letter-spacing:0.3px;">276</div>
<div style="position:absolute;left:327.94px;top:226.50px;width:28.18px;text-align:center;font-size:9px;font-weight:bold;color:#222;line-height:12px;letter-spacing:0.3px;">279</div>
<div style="position:absolute;left:346.12px;top:226.50px;width:28.18px;text-align:center;font-size:9px;font-weight:bold;color:#222;line-height:12px;letter-spacing:0.3px;">282</div>
<div style="position:absolute;left:364.30px;top:226.50px;width:28.18px;text-align:center;font-size:9px;font-weight:bold;color:#222;line-height:12px;letter-spacing:0.3px;">285</div>
<div style="position:absolute;left:382.48px;top:226.50px;width:28.18px;text-align:center;font-size:9px;font-weight:bold;color:#222;line-height:12px;letter-spacing:0.3px;">288</div>
<div style="position:absolute;left:400.66px;top:226.50px;width:28.18px;text-align:center;font-size:9px;font-weight:bold;color:#222;line-height:12px;letter-spacing:0.3px;">291</div>
<div style="position:absolute;left:418.84px;top:226.50px;width:28.18px;text-align:center;font-size:9px;font-weight:bold;color:#222;line-height:12px;letter-spacing:0.3px;">294</div>
<div style="position:absolute;left:437.02px;top:226.50px;width:28.18px;text-align:center;font-size:9px;font-weight:bold;color:#222;line-height:12px;letter-spacing:0.3px;">297</div>
<div style="position:absolute;left:273.40px;top:244.61px;width:28.18px;text-align:center;font-size:9px;font-weight:bold;color:#222;line-height:12px;letter-spacing:0.3px;">240</div>
<div style="position:absolute;left:291.58px;top:244.61px;width:28.18px;text-align:center;font-size:9px;font-weight:bold;color:#222;line-height:12px;letter-spacing:0.3px;">243</div>
<div style="position:absolute;left:309.76px;top:244.61px;width:28.18px;text-align:center;font-size:9px;font-weight:bold;color:#222;line-height:12px;letter-spacing:0.3px;">246</div>
<div style="position:absolute;left:327.94px;top:244.61px;width:28.18px;text-align:center;font-size:9px;font-weight:bold;color:#222;line-height:12px;letter-spacing:0.3px;">249</div>
<div style="position:absolute;left:346.12px;top:244.61px;width:28.18px;text-align:center;font-size:9px;font-weight:bold;color:#222;line-height:12px;letter-spacing:0.3px;">252</div>
<div style="position:absolute;left:364.30px;top:244.61px;width:28.18px;text-align:center;font-size:9px;font-weight:bold;color:#222;line-height:12px;letter-spacing:0.3px;">255</div>
<div style="position:absolute;left:382.48px;top:244.61px;width:28.18px;text-align:center;font-size:9px;font-weight:bold;color:#222;line-height:12px;letter-spacing:0.3px;">258</div>
<div style="position:absolute;left:400.66px;top:244.61px;width:28.18px;text-align:center;font-size:9px;font-weight:bold;color:#222;line-height:12px;letter-spacing:0.3px;">261</div>
<div style="position:absolute;left:418.84px;top:244.61px;width:28.18px;text-align:center;font-size:9px;font-weight:bold;color:#222;line-height:12px;letter-spacing:0.3px;">264</div>
<div style="position:absolute;left:437.02px;top:244.61px;width:28.18px;text-align:center;font-size:9px;font-weight:bold;color:#222;line-height:12px;letter-spacing:0.3px;">267</div>
<div style="position:absolute;left:273.40px;top:262.72px;width:28.18px;text-align:center;font-size:9px;font-weight:bold;color:#222;line-height:12px;letter-spacing:0.3px;">210</div>
<div style="position:absolute;left:291.58px;top:262.72px;width:28.18px;text-align:center;font-size:9px;font-weight:bold;color:#222;line-height:12px;letter-spacing:0.3px;">213</div>
<div style="position:absolute;left:309.76px;top:262.72px;width:28.18px;text-align:center;font-size:9px;font-weight:bold;color:#222;line-height:12px;letter-spacing:0.3px;">216</div>
<div style="position:absolute;left:327.94px;top:262.72px;width:28.18px;text-align:center;font-size:9px;font-weight:bold;color:#222;line-height:12px;letter-spacing:0.3px;">219</div>
<div style="position:absolute;left:346.12px;top:262.72px;width:28.18px;text-align:center;font-size:9px;font-weight:bold;color:#222;line-height:12px;letter-spacing:0.3px;">222</div>
<div style="position:absolute;left:364.30px;top:262.72px;width:28.18px;text-align:center;font-size:9px;font-weight:bold;color:#222;line-height:12px;letter-spacing:0.3px;">225</div>
<div style="position:absolute;left:382.48px;top:262.72px;width:28.18px;text-align:center;font-size:9px;font-weight:bold;color:#222;line-height:12px;letter-spacing:0.3px;">228</div>
<div style="position:absolute;left:400.66px;top:262.72px;width:28.18px;text-align:center;font-size:9px;font-weight:bold;color:#222;line-height:12px;letter-spacing:0.3px;">231</div>
<div style="position:absolute;left:418.84px;top:262.72px;width:28.18px;text-align:center;font-size:9px;font-weight:bold;color:#222;line-height:12px;letter-spacing:0.3px;">234</div>
<div style="position:absolute;left:437.02px;top:262.72px;width:28.18px;text-align:center;font-size:9px;font-weight:bold;color:#222;line-height:12px;letter-spacing:0.3px;">237</div>
<div style="position:absolute;left:273.40px;top:280.83px;width:28.18px;text-align:center;font-size:9px;font-weight:bold;color:#222;line-height:12px;letter-spacing:0.3px;">180</div>
<div style="position:absolute;left:291.58px;top:280.83px;width:28.18px;text-align:center;font-size:9px;font-weight:bold;color:#222;line-height:12px;letter-spacing:0.3px;">183</div>
<div style="position:absolute;left:309.76px;top:280.83px;width:28.18px;text-align:center;font-size:9px;font-weight:bold;color:#222;line-height:12px;letter-spacing:0.3px;">186</div>
<div style="position:absolute;left:327.94px;top:280.83px;width:28.18px;text-align:center;font-size:9px;font-weight:bold;color:#222;line-height:12px;letter-spacing:0.3px;">189</div>
<div style="position:absolute;left:346.12px;top:280.83px;width:28.18px;text-align:center;font-size:9px;font-weight:bold;color:#222;line-height:12px;letter-spacing:0.3px;">192</div>
<div style="position:absolute;left:364.30px;top:280.83px;width:28.18px;text-align:center;font-size:9px;font-weight:bold;color:#222;line-height:12px;letter-spacing:0.3px;">195</div>
<div style="position:absolute;left:382.48px;top:280.83px;width:28.18px;text-align:center;font-size:9px;font-weight:bold;color:#222;line-height:12px;letter-spacing:0.3px;">198</div>
<div style="position:absolute;left:400.66px;top:280.83px;width:28.18px;text-align:center;font-size:9px;font-weight:bold;color:#222;line-height:12px;letter-spacing:0.3px;">201</div>
<div style="position:absolute;left:418.84px;top:280.83px;width:28.18px;text-align:center;font-size:9px;font-weight:bold;color:#222;line-height:12px;letter-spacing:0.3px;">204</div>
<div style="position:absolute;left:437.02px;top:280.83px;width:28.18px;text-align:center;font-size:9px;font-weight:bold;color:#222;line-height:12px;letter-spacing:0.3px;">207</div>
<div style="position:absolute;left:273.40px;top:298.94px;width:28.18px;text-align:center;font-size:9px;font-weight:bold;color:#222;line-height:12px;letter-spacing:0.3px;">150</div>
<div style="position:absolute;left:291.58px;top:298.94px;width:28.18px;text-align:center;font-size:9px;font-weight:bold;color:#222;line-height:12px;letter-spacing:0.3px;">153</div>
<div style="position:absolute;left:309.76px;top:298.94px;width:28.18px;text-align:center;font-size:9px;font-weight:bold;color:#222;line-height:12px;letter-spacing:0.3px;">156</div>
<div style="position:absolute;left:327.94px;top:298.94px;width:28.18px;text-align:center;font-size:9px;font-weight:bold;color:#222;line-height:12px;letter-spacing:0.3px;">159</div>
<div style="position:absolute;left:346.12px;top:298.94px;width:28.18px;text-align:center;font-size:9px;font-weight:bold;color:#222;line-height:12px;letter-spacing:0.3px;">162</div>
<div style="position:absolute;left:364.30px;top:298.94px;width:28.18px;text-align:center;font-size:9px;font-weight:bold;color:#222;line-height:12px;letter-spacing:0.3px;">165</div>
<div style="position:absolute;left:382.48px;top:298.94px;width:28.18px;text-align:center;font-size:9px;font-weight:bold;color:#222;line-height:12px;letter-spacing:0.3px;">168</div>
<div style="position:absolute;left:400.66px;top:298.94px;width:28.18px;text-align:center;font-size:9px;font-weight:bold;color:#222;line-height:12px;letter-spacing:0.3px;">171</div>
<div style="position:absolute;left:418.84px;top:298.94px;width:28.18px;text-align:center;font-size:9px;font-weight:bold;color:#222;line-height:12px;letter-spacing:0.3px;">174</div>
<div style="position:absolute;left:437.02px;top:298.94px;width:28.18px;text-align:center;font-size:9px;font-weight:bold;color:#222;line-height:12px;letter-spacing:0.3px;">177</div>
<div style="position:absolute;left:273.40px;top:317.05px;width:28.18px;text-align:center;font-size:9px;font-weight:bold;color:#222;line-height:12px;letter-spacing:0.3px;">120</div>
<div style="position:absolute;left:291.58px;top:317.05px;width:28.18px;text-align:center;font-size:9px;font-weight:bold;color:#222;line-height:12px;letter-spacing:0.3px;">123</div>
<div style="position:absolute;left:309.76px;top:317.05px;width:28.18px;text-align:center;font-size:9px;font-weight:bold;color:#222;line-height:12px;letter-spacing:0.3px;">126</div>
<div style="position:absolute;left:327.94px;top:317.05px;width:28.18px;text-align:center;font-size:9px;font-weight:bold;color:#fff;line-height:12px;letter-spacing:0.3px;">129</div>
<div style="position:absolute;left:346.12px;top:317.05px;width:28.18px;text-align:center;font-size:9px;font-weight:bold;color:#222;line-height:12px;letter-spacing:0.3px;">132</div>
<div style="position:absolute;left:364.30px;top:317.05px;width:28.18px;text-align:center;font-size:9px;font-weight:bold;color:#222;line-height:12px;letter-spacing:0.3px;">135</div>
<div style="position:absolute;left:382.48px;top:317.05px;width:28.18px;text-align:center;font-size:9px;font-weight:bold;color:#222;line-height:12px;letter-spacing:0.3px;">138</div>
<div style="position:absolute;left:400.66px;top:317.05px;width:28.18px;text-align:center;font-size:9px;font-weight:bold;color:#222;line-height:12px;letter-spacing:0.3px;">141</div>
<div style="position:absolute;left:418.84px;top:317.05px;width:28.18px;text-align:center;font-size:9px;font-weight:bold;color:#222;line-height:12px;letter-spacing:0.3px;">144</div>
<div style="position:absolute;left:437.02px;top:317.05px;width:28.18px;text-align:center;font-size:9px;font-weight:bold;color:#222;line-height:12px;letter-spacing:0.3px;">147</div>
<div style="position:absolute;left:273.40px;top:335.16px;width:28.18px;text-align:center;font-size:9px;font-weight:bold;color:#222;line-height:12px;letter-spacing:0.3px;">90</div>
<div style="position:absolute;left:291.58px;top:335.16px;width:28.18px;text-align:center;font-size:9px;font-weight:bold;color:#222;line-height:12px;letter-spacing:0.3px;">93</div>
<div style="position:absolute;left:309.76px;top:335.16px;width:28.18px;text-align:center;font-size:9px;font-weight:bold;color:#222;line-height:12px;letter-spacing:0.3px;">96</div>
<div style="position:absolute;left:327.94px;top:335.16px;width:28.18px;text-align:center;font-size:9px;font-weight:bold;color:#222;line-height:12px;letter-spacing:0.3px;">99</div>
<div style="position:absolute;left:346.12px;top:335.16px;width:28.18px;text-align:center;font-size:9px;font-weight:bold;color:#222;line-height:12px;letter-spacing:0.3px;">102</div>
<div style="position:absolute;left:364.30px;top:335.16px;width:28.18px;text-align:center;font-size:9px;font-weight:bold;color:#222;line-height:12px;letter-spacing:0.3px;">105</div>
<div style="position:absolute;left:382.48px;top:335.16px;width:28.18px;text-align:center;font-size:9px;font-weight:bold;color:#222;line-height:12px;letter-spacing:0.3px;">108</div>
<div style="position:absolute;left:400.66px;top:335.16px;width:28.18px;text-align:center;font-size:9px;font-weight:bold;color:#222;line-height:12px;letter-spacing:0.3px;">111</div>
<div style="position:absolute;left:418.84px;top:335.16px;width:28.18px;text-align:center;font-size:9px;font-weight:bold;color:#222;line-height:12px;letter-spacing:0.3px;">114</div>
<div style="position:absolute;left:437.02px;top:335.16px;width:28.18px;text-align:center;font-size:9px;font-weight:bold;color:#222;line-height:12px;letter-spacing:0.3px;">117</div>
<div style="position:absolute;left:273.40px;top:353.27px;width:28.18px;text-align:center;font-size:9px;font-weight:bold;color:#222;line-height:12px;letter-spacing:0.3px;">60</div>
<div style="position:absolute;left:291.58px;top:353.27px;width:28.18px;text-align:center;font-size:9px;font-weight:bold;color:#222;line-height:12px;letter-spacing:0.3px;">63</div>
<div style="position:absolute;left:309.76px;top:353.27px;width:28.18px;text-align:center;font-size:9px;font-weight:bold;color:#222;line-height:12px;letter-spacing:0.3px;">66</div>
<div style="position:absolute;left:327.94px;top:353.27px;width:28.18px;text-align:center;font-size:9px;font-weight:bold;color:#222;line-height:12px;letter-spacing:0.3px;">69</div>
<div style="position:absolute;left:346.12px;top:353.27px;width:28.18px;text-align:center;font-size:9px;font-weight:bold;color:#222;line-height:12px;letter-spacing:0.3px;">72</div>
<div style="position:absolute;left:364.30px;top:353.27px;width:28.18px;text-align:center;font-size:9px;font-weight:bold;color:#222;line-height:12px;letter-spacing:0.3px;">75</div>
<div style="position:absolute;left:382.48px;top:353.27px;width:28.18px;text-align:center;font-size:9px;font-weight:bold;color:#222;line-height:12px;letter-spacing:0.3px;">78</div>
<div style="position:absolute;left:400.66px;top:353.27px;width:28.18px;text-align:center;font-size:9px;font-weight:bold;color:#222;line-height:12px;letter-spacing:0.3px;">81</div>
<div style="position:absolute;left:418.84px;top:353.27px;width:28.18px;text-align:center;font-size:9px;font-weight:bold;color:#222;line-height:12px;letter-spacing:0.3px;">84</div>
<div style="position:absolute;left:437.02px;top:353.27px;width:28.18px;text-align:center;font-size:9px;font-weight:bold;color:#222;line-height:12px;letter-spacing:0.3px;">87</div>
<div style="position:absolute;left:273.40px;top:371.38px;width:28.18px;text-align:center;font-size:9px;font-weight:bold;color:#222;line-height:12px;letter-spacing:0.3px;">30</div>
<div style="position:absolute;left:291.58px;top:371.38px;width:28.18px;text-align:center;font-size:9px;font-weight:bold;color:#222;line-height:12px;letter-spacing:0.3px;">33</div>
<div style="position:absolute;left:309.76px;top:371.38px;width:28.18px;text-align:center;font-size:9px;font-weight:bold;color:#222;line-height:12px;letter-spacing:0.3px;">36</div>
<div style="position:absolute;left:327.94px;top:371.38px;width:28.18px;text-align:center;font-size:9px;font-weight:bold;color:#222;line-height:12px;letter-spacing:0.3px;">39</div>
<div style="position:absolute;left:346.12px;top:371.38px;width:28.18px;text-align:center;font-size:9px;font-weight:bold;color:#222;line-height:12px;letter-spacing:0.3px;">42</div>
<div style="position:absolute;left:364.30px;top:371.38px;width:28.18px;text-align:center;font-size:9px;font-weight:bold;color:#222;line-height:12px;letter-spacing:0.3px;">45</div>
<div style="position:absolute;left:382.48px;top:371.38px;width:28.18px;text-align:center;font-size:9px;font-weight:bold;color:#222;line-height:12px;letter-spacing:0.3px;">48</div>
<div style="position:absolute;left:400.66px;top:371.38px;width:28.18px;text-align:center;font-size:9px;font-weight:bold;color:#222;line-height:12px;letter-spacing:0.3px;">51</div>
<div style="position:absolute;left:418.84px;top:371.38px;width:28.18px;text-align:center;font-size:9px;font-weight:bold;color:#222;line-height:12px;letter-spacing:0.3px;">54</div>
<div style="position:absolute;left:437.02px;top:371.38px;width:28.18px;text-align:center;font-size:9px;font-weight:bold;color:#222;line-height:12px;letter-spacing:0.3px;">57</div>
<div style="position:absolute;left:273.40px;top:389.49px;width:28.18px;text-align:center;font-size:9px;font-weight:bold;color:#222;line-height:12px;letter-spacing:0.3px;">0</div>
<div style="position:absolute;left:291.58px;top:389.49px;width:28.18px;text-align:center;font-size:9px;font-weight:bold;color:#222;line-height:12px;letter-spacing:0.3px;">3</div>
<div style="position:absolute;left:309.76px;top:389.49px;width:28.18px;text-align:center;font-size:9px;font-weight:bold;color:#222;line-height:12px;letter-spacing:0.3px;">6</div>
<div style="position:absolute;left:327.94px;top:389.49px;width:28.18px;text-align:center;font-size:9px;font-weight:bold;color:#222;line-height:12px;letter-spacing:0.3px;">9</div>
<div style="position:absolute;left:346.12px;top:389.49px;width:28.18px;text-align:center;font-size:9px;font-weight:bold;color:#222;line-height:12px;letter-spacing:0.3px;">12</div>
<div style="position:absolute;left:364.30px;top:389.49px;width:28.18px;text-align:center;font-size:9px;font-weight:bold;color:#222;line-height:12px;letter-spacing:0.3px;">15</div>
<div style="position:absolute;left:382.48px;top:389.49px;width:28.18px;text-align:center;font-size:9px;font-weight:bold;color:#222;line-height:12px;letter-spacing:0.3px;">18</div>
<div style="position:absolute;left:400.66px;top:389.49px;width:28.18px;text-align:center;font-size:9px;font-weight:bold;color:#222;line-height:12px;letter-spacing:0.3px;">21</div>
<div style="position:absolute;left:418.84px;top:389.49px;width:28.18px;text-align:center;font-size:9px;font-weight:bold;color:#222;line-height:12px;letter-spacing:0.3px;">24</div>
<div style="position:absolute;left:437.02px;top:389.49px;width:28.18px;text-align:center;font-size:9px;font-weight:bold;color:#222;line-height:12px;letter-spacing:0.3px;">27</div>
<div style="position:absolute;left:485.8px;top:142.6px;width:509.7px;height:426.2px;border-radius:7px;overflow:hidden;box-shadow:0 2px 18px rgba(0,0,0,0.28);background:#4a4a4a;">
<div style="position:absolute;left:0;top:0;width:509.7px;height:24.2px;background:#202020;"></div>
<div style="position:absolute;left:0;top:24.2px;width:509.7px;height:402.0px;background:linear-gradient(130deg,#656565,#3d3d3d);border-top:1px solid #7a7a7a;box-sizing:border-box;"></div>
<svg style="position:absolute;left:6.699999999999989px;top:4.900000000000006px" width="15" height="14"><g stroke="#e07d22" stroke-width="1.4" fill="none" stroke-linecap="round"><path d="M1 5.5 V1.5 H12.5 L1.5 12.5"/><path d="M12.5 6 L6.5 12.5"/><path d="M12.5 10 L10 12.5"/></g></svg>
<div style="position:absolute;left:24.599999999999966px;top:6.400000000000006px;color:#8e8e8e;font-size:9.5px;line-height:12px;">3D Preview</div>
<div style="position:absolute;left:413.2px;top:11.400000000000006px;width:9px;height:1px;background:#9a9a9a;"></div>
<div style="position:absolute;left:449.2px;top:7.400000000000006px;width:8.5px;height:8.5px;border:1px solid #9a9a9a;border-radius:1.5px;box-sizing:border-box;"></div>
<svg style="position:absolute;left:485.2px;top:6.400000000000006px" width="10" height="10"><path d="M1 1 L9 9 M9 1 L1 9" stroke="#a0a0a0" stroke-width="1.1"/></svg>
<svg style="position:absolute;left:0;top:0" width="509.7" height="426.2"><g fill="#fafafa"><circle cx="88.3" cy="160.8" r="1.55"/><circle cx="109.5" cy="160.8" r="1.55"/><circle cx="130.7" cy="160.8" r="1.55"/><circle cx="151.9" cy="160.8" r="1.55"/><circle cx="173.1" cy="160.8" r="1.55"/><circle cx="194.3" cy="160.8" r="1.55"/><circle cx="215.5" cy="160.8" r="1.55"/><circle cx="236.7" cy="160.8" r="1.55"/><circle cx="257.9" cy="160.8" r="1.55"/><circle cx="279.1" cy="160.8" r="1.55"/><circle cx="86.2" cy="184.0" r="1.55"/><circle cx="107.4" cy="184.0" r="1.55"/><circle cx="128.6" cy="184.0" r="1.55"/><circle cx="149.8" cy="184.0" r="1.55"/><circle cx="171.0" cy="184.0" r="1.55"/><circle cx="192.2" cy="184.0" r="1.55"/><circle cx="213.4" cy="184.0" r="1.55"/><circle cx="234.6" cy="184.0" r="1.55"/><circle cx="255.8" cy="184.0" r="1.55"/><circle cx="277.0" cy="184.0" r="1.55"/><circle cx="84.1" cy="207.3" r="1.55"/><circle cx="105.3" cy="207.3" r="1.55"/><circle cx="126.5" cy="207.3" r="1.55"/><circle cx="147.7" cy="207.3" r="1.55"/><circle cx="168.9" cy="207.3" r="1.55"/><circle cx="190.1" cy="207.3" r="1.55"/><circle cx="211.3" cy="207.3" r="1.55"/><circle cx="232.5" cy="207.3" r="1.55"/><circle cx="253.7" cy="207.3" r="1.55"/><circle cx="274.9" cy="207.3" r="1.55"/><circle cx="82.0" cy="230.5" r="1.55"/><circle cx="103.2" cy="230.5" r="1.55"/><circle cx="124.4" cy="230.5" r="1.55"/><circle cx="145.6" cy="230.5" r="1.55"/><circle cx="166.8" cy="230.5" r="1.55"/><circle cx="188.0" cy="230.5" r="1.55"/><circle cx="209.2" cy="230.5" r="1.55"/><circle cx="230.4" cy="230.5" r="1.55"/><circle cx="251.6" cy="230.5" r="1.55"/><circle cx="272.8" cy="230.5" r="1.55"/><circle cx="79.9" cy="253.8" r="1.55"/><circle cx="101.1" cy="253.8" r="1.55"/><circle cx="122.3" cy="253.8" r="1.55"/><circle cx="143.5" cy="253.8" r="1.55"/><circle cx="164.7" cy="253.8" r="1.55"/><circle cx="185.9" cy="253.8" r="1.55"/><circle cx="207.1" cy="253.8" r="1.55"/><circle cx="228.3" cy="253.8" r="1.55"/><circle cx="249.5" cy="253.8" r="1.55"/><circle cx="270.7" cy="253.8" r="1.55"/><circle cx="77.8" cy="277.0" r="1.55"/><circle cx="99.0" cy="277.0" r="1.55"/><circle cx="120.2" cy="277.0" r="1.55"/><circle cx="141.4" cy="277.0" r="1.55"/><circle cx="162.6" cy="277.0" r="1.55"/><circle cx="183.8" cy="277.0" r="1.55"/><circle cx="205.0" cy="277.0" r="1.55"/><circle cx="226.2" cy="277.0" r="1.55"/><circle cx="247.4" cy="277.0" r="1.55"/><circle cx="268.6" cy="277.0" r="1.55"/><circle cx="75.7" cy="300.3" r="1.55"/><circle cx="96.9" cy="300.3" r="1.55"/><circle cx="118.1" cy="300.3" r="1.55"/><circle cx="139.3" cy="300.3" r="1.55"/><circle cx="160.5" cy="300.3" r="1.55"/><circle cx="181.7" cy="300.3" r="1.55"/><circle cx="202.9" cy="300.3" r="1.55"/><circle cx="224.1" cy="300.3" r="1.55"/><circle cx="245.3" cy="300.3" r="1.55"/><circle cx="266.5" cy="300.3" r="1.55"/><circle cx="73.6" cy="323.5" r="1.55"/><circle cx="94.8" cy="323.5" r="1.55"/><circle cx="116.0" cy="323.5" r="1.55"/><circle cx="137.2" cy="323.5" r="1.55"/><circle cx="158.4" cy="323.5" r="1.55"/><circle cx="179.6" cy="323.5" r="1.55"/><circle cx="200.8" cy="323.5" r="1.55"/><circle cx="222.0" cy="323.5" r="1.55"/><circle cx="243.2" cy="323.5" r="1.55"/><circle cx="264.4" cy="323.5" r="1.55"/><circle cx="71.5" cy="346.8" r="1.55"/><circle cx="92.7" cy="346.8" r="1.55"/><circle cx="113.9" cy="346.8" r="1.55"/><circle cx="135.1" cy="346.8" r="1.55"/><circle cx="156.3" cy="346.8" r="1.55"/><circle cx="177.5" cy="346.8" r="1.55"/><circle cx="198.7" cy="346.8" r="1.55"/><circle cx="219.9" cy="346.8" r="1.55"/><circle cx="241.1" cy="346.8" r="1.55"/><circle cx="262.3" cy="346.8" r="1.55"/><circle cx="69.4" cy="370.0" r="1.55"/><circle cx="90.6" cy="370.0" r="1.55"/><circle cx="111.8" cy="370.0" r="1.55"/><circle cx="133.0" cy="370.0" r="1.55"/><circle cx="154.2" cy="370.0" r="1.55"/><circle cx="175.4" cy="370.0" r="1.55"/><circle cx="196.6" cy="370.0" r="1.55"/><circle cx="217.8" cy="370.0" r="1.55"/><circle cx="239.0" cy="370.0" r="1.55"/><circle cx="260.2" cy="370.0" r="1.55"/><circle cx="98.8" cy="165.5" r="1.55"/><circle cx="120.0" cy="165.5" r="1.55"/><circle cx="141.2" cy="165.5" r="1.55"/><circle cx="162.4" cy="165.5" r="1.55"/><circle cx="183.6" cy="165.5" r="1.55"/><circle cx="204.8" cy="165.5" r="1.55"/><circle cx="226.0" cy="165.5" r="1.55"/><circle cx="247.2" cy="165.5" r="1.55"/><circle cx="268.4" cy="165.5" r="1.55"/><circle cx="289.6" cy="165.5" r="1.55"/><circle cx="96.7" cy="188.7" r="1.55"/><circle cx="117.9" cy="188.7" r="1.55"/><circle cx="139.1" cy="188.7" r="1.55"/><circle cx="160.3" cy="188.7" r="1.55"/><circle cx="181.5" cy="188.7" r="1.55"/><circle cx="202.7" cy="188.7" r="1.55"/><circle cx="223.9" cy="188.7" r="1.55"/><circle cx="245.1" cy="188.7" r="1.55"/><circle cx="266.3" cy="188.7" r="1.55"/><circle cx="287.5" cy="188.7" r="1.55"/><circle cx="94.6" cy="212.0" r="1.55"/><circle cx="115.8" cy="212.0" r="1.55"/><circle cx="137.0" cy="212.0" r="1.55"/><circle cx="158.2" cy="212.0" r="1.55"/><circle cx="179.4" cy="212.0" r="1.55"/><circle cx="200.6" cy="212.0" r="1.55"/><circle cx="221.8" cy="212.0" r="1.55"/><circle cx="243.0" cy="212.0" r="1.55"/><circle cx="264.2" cy="212.0" r="1.55"/><circle cx="285.4" cy="212.0" r="1.55"/><circle cx="92.5" cy="235.2" r="1.55"/><circle cx="113.7" cy="235.2" r="1.55"/><circle cx="134.9" cy="235.2" r="1.55"/><circle cx="156.1" cy="235.2" r="1.55"/><circle cx="177.3" cy="235.2" r="1.55"/><circle cx="198.5" cy="235.2" r="1.55"/><circle cx="219.7" cy="235.2" r="1.55"/><circle cx="240.9" cy="235.2" r="1.55"/><circle cx="262.1" cy="235.2" r="1.55"/><circle cx="283.3" cy="235.2" r="1.55"/><circle cx="90.4" cy="258.5" r="1.55"/><circle cx="111.6" cy="258.5" r="1.55"/><circle cx="132.8" cy="258.5" r="1.55"/><circle cx="154.0" cy="258.5" r="1.55"/><circle cx="175.2" cy="258.5" r="1.55"/><circle cx="196.4" cy="258.5" r="1.55"/><circle cx="217.6" cy="258.5" r="1.55"/><circle cx="238.8" cy="258.5" r="1.55"/><circle cx="260.0" cy="258.5" r="1.55"/><circle cx="281.2" cy="258.5" r="1.55"/><circle cx="88.3" cy="281.8" r="1.55"/><circle cx="109.5" cy="281.8" r="1.55"/><circle cx="130.7" cy="281.8" r="1.55"/><circle cx="151.9" cy="281.8" r="1.55"/><circle cx="173.1" cy="281.8" r="1.55"/><circle cx="194.3" cy="281.8" r="1.55"/><circle cx="215.5" cy="281.8" r="1.55"/><circle cx="236.7" cy="281.8" r="1.55"/><circle cx="257.9" cy="281.8" r="1.55"/><circle cx="279.1" cy="281.8" r="1.55"/><circle cx="86.2" cy="305.0" r="1.55"/><circle cx="107.4" cy="305.0" r="1.55"/><circle cx="128.6" cy="305.0" r="1.55"/><circle cx="149.8" cy="305.0" r="1.55"/><circle cx="171.0" cy="305.0" r="1.55"/><circle cx="192.2" cy="305.0" r="1.55"/><circle cx="213.4" cy="305.0" r="1.55"/><circle cx="234.6" cy="305.0" r="1.55"/><circle cx="255.8" cy="305.0" r="1.55"/><circle cx="277.0" cy="305.0" r="1.55"/><circle cx="84.1" cy="328.2" r="1.55"/><circle cx="105.3" cy="328.2" r="1.55"/><circle cx="126.5" cy="328.2" r="1.55"/><circle cx="147.7" cy="328.2" r="1.55"/><circle cx="168.9" cy="328.2" r="1.55"/><circle cx="190.1" cy="328.2" r="1.55"/><circle cx="211.3" cy="328.2" r="1.55"/><circle cx="232.5" cy="328.2" r="1.55"/><circle cx="253.7" cy="328.2" r="1.55"/><circle cx="274.9" cy="328.2" r="1.55"/><circle cx="82.0" cy="351.5" r="1.55"/><circle cx="103.2" cy="351.5" r="1.55"/><circle cx="124.4" cy="351.5" r="1.55"/><circle cx="145.6" cy="351.5" r="1.55"/><circle cx="166.8" cy="351.5" r="1.55"/><circle cx="188.0" cy="351.5" r="1.55"/><circle cx="209.2" cy="351.5" r="1.55"/><circle cx="230.4" cy="351.5" r="1.55"/><circle cx="251.6" cy="351.5" r="1.55"/><circle cx="272.8" cy="351.5" r="1.55"/><circle cx="79.9" cy="374.8" r="1.55"/><circle cx="101.1" cy="374.8" r="1.55"/><circle cx="122.3" cy="374.8" r="1.55"/><circle cx="143.5" cy="374.8" r="1.55"/><circle cx="164.7" cy="374.8" r="1.55"/><circle cx="185.9" cy="374.8" r="1.55"/><circle cx="207.1" cy="374.8" r="1.55"/><circle cx="228.3" cy="374.8" r="1.55"/><circle cx="249.5" cy="374.8" r="1.55"/><circle cx="270.7" cy="374.8" r="1.55"/><circle cx="109.3" cy="170.2" r="1.55"/><circle cx="130.5" cy="170.2" r="1.55"/><circle cx="151.7" cy="170.2" r="1.55"/><circle cx="172.9" cy="170.2" r="1.55"/><circle cx="194.1" cy="170.2" r="1.55"/><circle cx="215.3" cy="170.2" r="1.55"/><circle cx="236.5" cy="170.2" r="1.55"/><circle cx="257.7" cy="170.2" r="1.55"/><circle cx="278.9" cy="170.2" r="1.55"/><circle cx="300.1" cy="170.2" r="1.55"/><circle cx="107.2" cy="193.4" r="1.55"/><circle cx="128.4" cy="193.4" r="1.55"/><circle cx="149.6" cy="193.4" r="1.55"/><circle cx="170.8" cy="193.4" r="1.55"/><circle cx="192.0" cy="193.4" r="1.55"/><circle cx="213.2" cy="193.4" r="1.55"/><circle cx="234.4" cy="193.4" r="1.55"/><circle cx="255.6" cy="193.4" r="1.55"/><circle cx="276.8" cy="193.4" r="1.55"/><circle cx="298.0" cy="193.4" r="1.55"/><circle cx="105.1" cy="216.7" r="1.55"/><circle cx="126.3" cy="216.7" r="1.55"/><circle cx="147.5" cy="216.7" r="1.55"/><circle cx="168.7" cy="216.7" r="1.55"/><circle cx="189.9" cy="216.7" r="1.55"/><circle cx="211.1" cy="216.7" r="1.55"/><circle cx="232.3" cy="216.7" r="1.55"/><circle cx="253.5" cy="216.7" r="1.55"/><circle cx="274.7" cy="216.7" r="1.55"/><circle cx="295.9" cy="216.7" r="1.55"/><circle cx="103.0" cy="239.9" r="1.55"/><circle cx="124.2" cy="239.9" r="1.55"/><circle cx="145.4" cy="239.9" r="1.55"/><circle cx="166.6" cy="239.9" r="1.55"/><circle cx="187.8" cy="239.9" r="1.55"/><circle cx="209.0" cy="239.9" r="1.55"/><circle cx="230.2" cy="239.9" r="1.55"/><circle cx="251.4" cy="239.9" r="1.55"/><circle cx="272.6" cy="239.9" r="1.55"/><circle cx="293.8" cy="239.9" r="1.55"/><circle cx="100.9" cy="263.2" r="1.55"/><circle cx="122.1" cy="263.2" r="1.55"/><circle cx="143.3" cy="263.2" r="1.55"/><circle cx="164.5" cy="263.2" r="1.55"/><circle cx="185.7" cy="263.2" r="1.55"/><circle cx="206.9" cy="263.2" r="1.55"/><circle cx="228.1" cy="263.2" r="1.55"/><circle cx="249.3" cy="263.2" r="1.55"/><circle cx="270.5" cy="263.2" r="1.55"/><circle cx="291.7" cy="263.2" r="1.55"/><circle cx="98.8" cy="286.4" r="1.55"/><circle cx="120.0" cy="286.4" r="1.55"/><circle cx="141.2" cy="286.4" r="1.55"/><circle cx="162.4" cy="286.4" r="1.55"/><circle cx="183.6" cy="286.4" r="1.55"/><circle cx="204.8" cy="286.4" r="1.55"/><circle cx="226.0" cy="286.4" r="1.55"/><circle cx="247.2" cy="286.4" r="1.55"/><circle cx="268.4" cy="286.4" r="1.55"/><circle cx="289.6" cy="286.4" r="1.55"/><circle cx="96.7" cy="309.7" r="1.55"/><circle cx="117.9" cy="309.7" r="1.55"/><circle cx="139.1" cy="309.7" r="1.55"/><circle cx="160.3" cy="309.7" r="1.55"/><circle cx="181.5" cy="309.7" r="1.55"/><circle cx="202.7" cy="309.7" r="1.55"/><circle cx="223.9" cy="309.7" r="1.55"/><circle cx="245.1" cy="309.7" r="1.55"/><circle cx="266.3" cy="309.7" r="1.55"/><circle cx="287.5" cy="309.7" r="1.55"/><circle cx="94.6" cy="332.9" r="1.55"/><circle cx="115.8" cy="332.9" r="1.55"/><circle cx="137.0" cy="332.9" r="1.55"/><circle cx="158.2" cy="332.9" r="1.55"/><circle cx="179.4" cy="332.9" r="1.55"/><circle cx="200.6" cy="332.9" r="1.55"/><circle cx="221.8" cy="332.9" r="1.55"/><circle cx="243.0" cy="332.9" r="1.55"/><circle cx="264.2" cy="332.9" r="1.55"/><circle cx="285.4" cy="332.9" r="1.55"/><circle cx="92.5" cy="356.2" r="1.55"/><circle cx="113.7" cy="356.2" r="1.55"/><circle cx="134.9" cy="356.2" r="1.55"/><circle cx="156.1" cy="356.2" r="1.55"/><circle cx="177.3" cy="356.2" r="1.55"/><circle cx="198.5" cy="356.2" r="1.55"/><circle cx="219.7" cy="356.2" r="1.55"/><circle cx="240.9" cy="356.2" r="1.55"/><circle cx="262.1" cy="356.2" r="1.55"/><circle cx="283.3" cy="356.2" r="1.55"/><circle cx="90.4" cy="379.4" r="1.55"/><circle cx="111.6" cy="379.4" r="1.55"/><circle cx="132.8" cy="379.4" r="1.55"/><circle cx="154.0" cy="379.4" r="1.55"/><circle cx="175.2" cy="379.4" r="1.55"/><circle cx="196.4" cy="379.4" r="1.55"/><circle cx="217.6" cy="379.4" r="1.55"/><circle cx="238.8" cy="379.4" r="1.55"/><circle cx="260.0" cy="379.4" r="1.55"/><circle cx="281.2" cy="379.4" r="1.55"/><circle cx="119.8" cy="174.9" r="1.55"/><circle cx="141.0" cy="174.9" r="1.55"/><circle cx="162.2" cy="174.9" r="1.55"/><circle cx="183.4" cy="174.9" r="1.55"/><circle cx="204.6" cy="174.9" r="1.55"/><circle cx="225.8" cy="174.9" r="1.55"/><circle cx="247.0" cy="174.9" r="1.55"/><circle cx="268.2" cy="174.9" r="1.55"/><circle cx="289.4" cy="174.9" r="1.55"/><circle cx="310.6" cy="174.9" r="1.55"/><circle cx="117.7" cy="198.2" r="1.55"/><circle cx="138.9" cy="198.2" r="1.55"/><circle cx="160.1" cy="198.2" r="1.55"/><circle cx="181.3" cy="198.2" r="1.55"/><circle cx="202.5" cy="198.2" r="1.55"/><circle cx="223.7" cy="198.2" r="1.55"/><circle cx="244.9" cy="198.2" r="1.55"/><circle cx="266.1" cy="198.2" r="1.55"/><circle cx="287.3" cy="198.2" r="1.55"/><circle cx="308.5" cy="198.2" r="1.55"/><circle cx="115.6" cy="221.4" r="1.55"/><circle cx="136.8" cy="221.4" r="1.55"/><circle cx="158.0" cy="221.4" r="1.55"/><circle cx="179.2" cy="221.4" r="1.55"/><circle cx="200.4" cy="221.4" r="1.55"/><circle cx="221.6" cy="221.4" r="1.55"/><circle cx="242.8" cy="221.4" r="1.55"/><circle cx="264.0" cy="221.4" r="1.55"/><circle cx="285.2" cy="221.4" r="1.55"/><circle cx="306.4" cy="221.4" r="1.55"/><circle cx="113.5" cy="244.7" r="1.55"/><circle cx="134.7" cy="244.7" r="1.55"/><circle cx="155.9" cy="244.7" r="1.55"/><circle cx="177.1" cy="244.7" r="1.55"/><circle cx="198.3" cy="244.7" r="1.55"/><circle cx="219.5" cy="244.7" r="1.55"/><circle cx="240.7" cy="244.7" r="1.55"/><circle cx="261.9" cy="244.7" r="1.55"/><circle cx="283.1" cy="244.7" r="1.55"/><circle cx="304.3" cy="244.7" r="1.55"/><circle cx="111.4" cy="267.9" r="1.55"/><circle cx="132.6" cy="267.9" r="1.55"/><circle cx="153.8" cy="267.9" r="1.55"/><circle cx="175.0" cy="267.9" r="1.55"/><circle cx="196.2" cy="267.9" r="1.55"/><circle cx="217.4" cy="267.9" r="1.55"/><circle cx="238.6" cy="267.9" r="1.55"/><circle cx="259.8" cy="267.9" r="1.55"/><circle cx="281.0" cy="267.9" r="1.55"/><circle cx="302.2" cy="267.9" r="1.55"/><circle cx="109.3" cy="291.1" r="1.55"/><circle cx="130.5" cy="291.1" r="1.55"/><circle cx="151.7" cy="291.1" r="1.55"/><circle cx="172.9" cy="291.1" r="1.55"/><circle cx="194.1" cy="291.1" r="1.55"/><circle cx="215.3" cy="291.1" r="1.55"/><circle cx="236.5" cy="291.1" r="1.55"/><circle cx="257.7" cy="291.1" r="1.55"/><circle cx="278.9" cy="291.1" r="1.55"/><circle cx="300.1" cy="291.1" r="1.55"/><circle cx="107.2" cy="314.4" r="1.55"/><circle cx="128.4" cy="314.4" r="1.55"/><circle cx="149.6" cy="314.4" r="1.55"/><circle cx="170.8" cy="314.4" r="1.55"/><circle cx="192.0" cy="314.4" r="1.55"/><circle cx="213.2" cy="314.4" r="1.55"/><circle cx="234.4" cy="314.4" r="1.55"/><circle cx="255.6" cy="314.4" r="1.55"/><circle cx="276.8" cy="314.4" r="1.55"/><circle cx="298.0" cy="314.4" r="1.55"/><circle cx="105.1" cy="337.6" r="1.55"/><circle cx="126.3" cy="337.6" r="1.55"/><circle cx="147.5" cy="337.6" r="1.55"/><circle cx="168.7" cy="337.6" r="1.55"/><circle cx="189.9" cy="337.6" r="1.55"/><circle cx="211.1" cy="337.6" r="1.55"/><circle cx="232.3" cy="337.6" r="1.55"/><circle cx="253.5" cy="337.6" r="1.55"/><circle cx="274.7" cy="337.6" r="1.55"/><circle cx="295.9" cy="337.6" r="1.55"/><circle cx="103.0" cy="360.9" r="1.55"/><circle cx="124.2" cy="360.9" r="1.55"/><circle cx="145.4" cy="360.9" r="1.55"/><circle cx="166.6" cy="360.9" r="1.55"/><circle cx="187.8" cy="360.9" r="1.55"/><circle cx="209.0" cy="360.9" r="1.55"/><circle cx="230.2" cy="360.9" r="1.55"/><circle cx="251.4" cy="360.9" r="1.55"/><circle cx="272.6" cy="360.9" r="1.55"/><circle cx="293.8" cy="360.9" r="1.55"/><circle cx="100.9" cy="384.1" r="1.55"/><circle cx="122.1" cy="384.1" r="1.55"/><circle cx="143.3" cy="384.1" r="1.55"/><circle cx="164.5" cy="384.1" r="1.55"/><circle cx="185.7" cy="384.1" r="1.55"/><circle cx="206.9" cy="384.1" r="1.55"/><circle cx="228.1" cy="384.1" r="1.55"/><circle cx="249.3" cy="384.1" r="1.55"/><circle cx="270.5" cy="384.1" r="1.55"/><circle cx="291.7" cy="384.1" r="1.55"/><circle cx="130.3" cy="179.6" r="1.55"/><circle cx="151.5" cy="179.6" r="1.55"/><circle cx="172.7" cy="179.6" r="1.55"/><circle cx="193.9" cy="179.6" r="1.55"/><circle cx="215.1" cy="179.6" r="1.55"/><circle cx="236.3" cy="179.6" r="1.55"/><circle cx="257.5" cy="179.6" r="1.55"/><circle cx="278.7" cy="179.6" r="1.55"/><circle cx="299.9" cy="179.6" r="1.55"/><circle cx="321.1" cy="179.6" r="1.55"/><circle cx="128.2" cy="202.8" r="1.55"/><circle cx="149.4" cy="202.8" r="1.55"/><circle cx="170.6" cy="202.8" r="1.55"/><circle cx="191.8" cy="202.8" r="1.55"/><circle cx="213.0" cy="202.8" r="1.55"/><circle cx="234.2" cy="202.8" r="1.55"/><circle cx="255.4" cy="202.8" r="1.55"/><circle cx="276.6" cy="202.8" r="1.55"/><circle cx="297.8" cy="202.8" r="1.55"/><circle cx="319.0" cy="202.8" r="1.55"/><circle cx="126.1" cy="226.1" r="1.55"/><circle cx="147.3" cy="226.1" r="1.55"/><circle cx="168.5" cy="226.1" r="1.55"/><circle cx="189.7" cy="226.1" r="1.55"/><circle cx="210.9" cy="226.1" r="1.55"/><circle cx="232.1" cy="226.1" r="1.55"/><circle cx="253.3" cy="226.1" r="1.55"/><circle cx="274.5" cy="226.1" r="1.55"/><circle cx="295.7" cy="226.1" r="1.55"/><circle cx="316.9" cy="226.1" r="1.55"/><circle cx="124.0" cy="249.3" r="1.55"/><circle cx="145.2" cy="249.3" r="1.55"/><circle cx="166.4" cy="249.3" r="1.55"/><circle cx="187.6" cy="249.3" r="1.55"/><circle cx="208.8" cy="249.3" r="1.55"/><circle cx="230.0" cy="249.3" r="1.55"/><circle cx="251.2" cy="249.3" r="1.55"/><circle cx="272.4" cy="249.3" r="1.55"/><circle cx="293.6" cy="249.3" r="1.55"/><circle cx="314.8" cy="249.3" r="1.55"/><circle cx="121.9" cy="272.6" r="1.55"/><circle cx="143.1" cy="272.6" r="1.55"/><circle cx="164.3" cy="272.6" r="1.55"/><circle cx="185.5" cy="272.6" r="1.55"/><circle cx="206.7" cy="272.6" r="1.55"/><circle cx="227.9" cy="272.6" r="1.55"/><circle cx="249.1" cy="272.6" r="1.55"/><circle cx="270.3" cy="272.6" r="1.55"/><circle cx="291.5" cy="272.6" r="1.55"/><circle cx="312.7" cy="272.6" r="1.55"/><circle cx="119.8" cy="295.9" r="1.55"/><circle cx="141.0" cy="295.9" r="1.55"/><circle cx="162.2" cy="295.9" r="1.55"/><circle cx="183.4" cy="295.9" r="1.55"/><circle cx="204.6" cy="295.9" r="1.55"/><circle cx="225.8" cy="295.9" r="1.55"/><circle cx="247.0" cy="295.9" r="1.55"/><circle cx="268.2" cy="295.9" r="1.55"/><circle cx="289.4" cy="295.9" r="1.55"/><circle cx="310.6" cy="295.9" r="1.55"/><circle cx="117.7" cy="319.1" r="1.55"/><circle cx="138.9" cy="319.1" r="1.55"/><circle cx="160.1" cy="319.1" r="1.55"/><circle cx="181.3" cy="319.1" r="1.55"/><circle cx="202.5" cy="319.1" r="1.55"/><circle cx="223.7" cy="319.1" r="1.55"/><circle cx="244.9" cy="319.1" r="1.55"/><circle cx="266.1" cy="319.1" r="1.55"/><circle cx="287.3" cy="319.1" r="1.55"/><circle cx="308.5" cy="319.1" r="1.55"/><circle cx="115.6" cy="342.4" r="1.55"/><circle cx="136.8" cy="342.4" r="1.55"/><circle cx="158.0" cy="342.4" r="1.55"/><circle cx="179.2" cy="342.4" r="1.55"/><circle cx="200.4" cy="342.4" r="1.55"/><circle cx="221.6" cy="342.4" r="1.55"/><circle cx="242.8" cy="342.4" r="1.55"/><circle cx="264.0" cy="342.4" r="1.55"/><circle cx="285.2" cy="342.4" r="1.55"/><circle cx="306.4" cy="342.4" r="1.55"/><circle cx="113.5" cy="365.6" r="1.55"/><circle cx="134.7" cy="365.6" r="1.55"/><circle cx="155.9" cy="365.6" r="1.55"/><circle cx="177.1" cy="365.6" r="1.55"/><circle cx="198.3" cy="365.6" r="1.55"/><circle cx="219.5" cy="365.6" r="1.55"/><circle cx="240.7" cy="365.6" r="1.55"/><circle cx="261.9" cy="365.6" r="1.55"/><circle cx="283.1" cy="365.6" r="1.55"/><circle cx="304.3" cy="365.6" r="1.55"/><circle cx="111.4" cy="388.8" r="1.55"/><circle cx="132.6" cy="388.8" r="1.55"/><circle cx="153.8" cy="388.8" r="1.55"/><circle cx="175.0" cy="388.8" r="1.55"/><circle cx="196.2" cy="388.8" r="1.55"/><circle cx="217.4" cy="388.8" r="1.55"/><circle cx="238.6" cy="388.8" r="1.55"/><circle cx="259.8" cy="388.8" r="1.55"/><circle cx="281.0" cy="388.8" r="1.55"/><circle cx="302.2" cy="388.8" r="1.55"/><circle cx="140.8" cy="184.3" r="1.55"/><circle cx="162.0" cy="184.3" r="1.55"/><circle cx="183.2" cy="184.3" r="1.55"/><circle cx="204.4" cy="184.3" r="1.55"/><circle cx="225.6" cy="184.3" r="1.55"/><circle cx="246.8" cy="184.3" r="1.55"/><circle cx="268.0" cy="184.3" r="1.55"/><circle cx="289.2" cy="184.3" r="1.55"/><circle cx="310.4" cy="184.3" r="1.55"/><circle cx="331.6" cy="184.3" r="1.55"/><circle cx="138.7" cy="207.5" r="1.55"/><circle cx="159.9" cy="207.5" r="1.55"/><circle cx="181.1" cy="207.5" r="1.55"/><circle cx="202.3" cy="207.5" r="1.55"/><circle cx="223.5" cy="207.5" r="1.55"/><circle cx="244.7" cy="207.5" r="1.55"/><circle cx="265.9" cy="207.5" r="1.55"/><circle cx="287.1" cy="207.5" r="1.55"/><circle cx="308.3" cy="207.5" r="1.55"/><circle cx="329.5" cy="207.5" r="1.55"/><circle cx="136.6" cy="230.8" r="1.55"/><circle cx="157.8" cy="230.8" r="1.55"/><circle cx="179.0" cy="230.8" r="1.55"/><circle cx="200.2" cy="230.8" r="1.55"/><circle cx="221.4" cy="230.8" r="1.55"/><circle cx="242.6" cy="230.8" r="1.55"/><circle cx="263.8" cy="230.8" r="1.55"/><circle cx="285.0" cy="230.8" r="1.55"/><circle cx="306.2" cy="230.8" r="1.55"/><circle cx="327.4" cy="230.8" r="1.55"/><circle cx="134.5" cy="254.0" r="1.55"/><circle cx="155.7" cy="254.0" r="1.55"/><circle cx="176.9" cy="254.0" r="1.55"/><circle cx="198.1" cy="254.0" r="1.55"/><circle cx="219.3" cy="254.0" r="1.55"/><circle cx="240.5" cy="254.0" r="1.55"/><circle cx="261.7" cy="254.0" r="1.55"/><circle cx="282.9" cy="254.0" r="1.55"/><circle cx="304.1" cy="254.0" r="1.55"/><circle cx="325.3" cy="254.0" r="1.55"/><circle cx="132.4" cy="277.3" r="1.55"/><circle cx="153.6" cy="277.3" r="1.55"/><circle cx="174.8" cy="277.3" r="1.55"/><circle cx="196.0" cy="277.3" r="1.55"/><circle cx="217.2" cy="277.3" r="1.55"/><circle cx="238.4" cy="277.3" r="1.55"/><circle cx="259.6" cy="277.3" r="1.55"/><circle cx="280.8" cy="277.3" r="1.55"/><circle cx="302.0" cy="277.3" r="1.55"/><circle cx="323.2" cy="277.3" r="1.55"/><circle cx="130.3" cy="300.5" r="1.55"/><circle cx="151.5" cy="300.5" r="1.55"/><circle cx="172.7" cy="300.5" r="1.55"/><circle cx="193.9" cy="300.5" r="1.55"/><circle cx="215.1" cy="300.5" r="1.55"/><circle cx="236.3" cy="300.5" r="1.55"/><circle cx="257.5" cy="300.5" r="1.55"/><circle cx="278.7" cy="300.5" r="1.55"/><circle cx="299.9" cy="300.5" r="1.55"/><circle cx="321.1" cy="300.5" r="1.55"/><circle cx="128.2" cy="323.8" r="1.55"/><circle cx="149.4" cy="323.8" r="1.55"/><circle cx="170.6" cy="323.8" r="1.55"/><circle cx="191.8" cy="323.8" r="1.55"/><circle cx="213.0" cy="323.8" r="1.55"/><circle cx="234.2" cy="323.8" r="1.55"/><circle cx="255.4" cy="323.8" r="1.55"/><circle cx="276.6" cy="323.8" r="1.55"/><circle cx="297.8" cy="323.8" r="1.55"/><circle cx="319.0" cy="323.8" r="1.55"/><circle cx="126.1" cy="347.0" r="1.55"/><circle cx="147.3" cy="347.0" r="1.55"/><circle cx="168.5" cy="347.0" r="1.55"/><circle cx="189.7" cy="347.0" r="1.55"/><circle cx="210.9" cy="347.0" r="1.55"/><circle cx="232.1" cy="347.0" r="1.55"/><circle cx="253.3" cy="347.0" r="1.55"/><circle cx="274.5" cy="347.0" r="1.55"/><circle cx="295.7" cy="347.0" r="1.55"/><circle cx="316.9" cy="347.0" r="1.55"/><circle cx="124.0" cy="370.3" r="1.55"/><circle cx="145.2" cy="370.3" r="1.55"/><circle cx="166.4" cy="370.3" r="1.55"/><circle cx="187.6" cy="370.3" r="1.55"/><circle cx="208.8" cy="370.3" r="1.55"/><circle cx="230.0" cy="370.3" r="1.55"/><circle cx="251.2" cy="370.3" r="1.55"/><circle cx="272.4" cy="370.3" r="1.55"/><circle cx="293.6" cy="370.3" r="1.55"/><circle cx="314.8" cy="370.3" r="1.55"/><circle cx="121.9" cy="393.5" r="1.55"/><circle cx="143.1" cy="393.5" r="1.55"/><circle cx="164.3" cy="393.5" r="1.55"/><circle cx="185.5" cy="393.5" r="1.55"/><circle cx="206.7" cy="393.5" r="1.55"/><circle cx="227.9" cy="393.5" r="1.55"/><circle cx="249.1" cy="393.5" r="1.55"/><circle cx="270.3" cy="393.5" r="1.55"/><circle cx="291.5" cy="393.5" r="1.55"/><circle cx="312.7" cy="393.5" r="1.55"/><circle cx="151.3" cy="189.0" r="1.55"/><circle cx="172.5" cy="189.0" r="1.55"/><circle cx="193.7" cy="189.0" r="1.55"/><circle cx="214.9" cy="189.0" r="1.55"/><circle cx="236.1" cy="189.0" r="1.55"/><circle cx="257.3" cy="189.0" r="1.55"/><circle cx="278.5" cy="189.0" r="1.55"/><circle cx="299.7" cy="189.0" r="1.55"/><circle cx="320.9" cy="189.0" r="1.55"/><circle cx="342.1" cy="189.0" r="1.55"/><circle cx="149.2" cy="212.2" r="1.55"/><circle cx="170.4" cy="212.2" r="1.55"/><circle cx="191.6" cy="212.2" r="1.55"/><circle cx="212.8" cy="212.2" r="1.55"/><circle cx="234.0" cy="212.2" r="1.55"/><circle cx="255.2" cy="212.2" r="1.55"/><circle cx="276.4" cy="212.2" r="1.55"/><circle cx="297.6" cy="212.2" r="1.55"/><circle cx="318.8" cy="212.2" r="1.55"/><circle cx="340.0" cy="212.2" r="1.55"/><circle cx="147.1" cy="235.5" r="1.55"/><circle cx="168.3" cy="235.5" r="1.55"/><circle cx="189.5" cy="235.5" r="1.55"/><circle cx="210.7" cy="235.5" r="1.55"/><circle cx="231.9" cy="235.5" r="1.55"/><circle cx="253.1" cy="235.5" r="1.55"/><circle cx="274.3" cy="235.5" r="1.55"/><circle cx="295.5" cy="235.5" r="1.55"/><circle cx="316.7" cy="235.5" r="1.55"/><circle cx="337.9" cy="235.5" r="1.55"/><circle cx="145.0" cy="258.8" r="1.55"/><circle cx="166.2" cy="258.8" r="1.55"/><circle cx="187.4" cy="258.8" r="1.55"/><circle cx="208.6" cy="258.8" r="1.55"/><circle cx="229.8" cy="258.8" r="1.55"/><circle cx="251.0" cy="258.8" r="1.55"/><circle cx="272.2" cy="258.8" r="1.55"/><circle cx="293.4" cy="258.8" r="1.55"/><circle cx="314.6" cy="258.8" r="1.55"/><circle cx="335.8" cy="258.8" r="1.55"/><circle cx="142.9" cy="282.0" r="1.55"/><circle cx="164.1" cy="282.0" r="1.55"/><circle cx="185.3" cy="282.0" r="1.55"/><circle cx="206.5" cy="282.0" r="1.55"/><circle cx="227.7" cy="282.0" r="1.55"/><circle cx="248.9" cy="282.0" r="1.55"/><circle cx="270.1" cy="282.0" r="1.55"/><circle cx="291.3" cy="282.0" r="1.55"/><circle cx="312.5" cy="282.0" r="1.55"/><circle cx="333.7" cy="282.0" r="1.55"/><circle cx="140.8" cy="305.2" r="1.55"/><circle cx="162.0" cy="305.2" r="1.55"/><circle cx="183.2" cy="305.2" r="1.55"/><circle cx="204.4" cy="305.2" r="1.55"/><circle cx="225.6" cy="305.2" r="1.55"/><circle cx="246.8" cy="305.2" r="1.55"/><circle cx="268.0" cy="305.2" r="1.55"/><circle cx="289.2" cy="305.2" r="1.55"/><circle cx="310.4" cy="305.2" r="1.55"/><circle cx="331.6" cy="305.2" r="1.55"/><circle cx="138.7" cy="328.5" r="1.55"/><circle cx="159.9" cy="328.5" r="1.55"/><circle cx="181.1" cy="328.5" r="1.55"/><circle cx="202.3" cy="328.5" r="1.55"/><circle cx="223.5" cy="328.5" r="1.55"/><circle cx="244.7" cy="328.5" r="1.55"/><circle cx="265.9" cy="328.5" r="1.55"/><circle cx="287.1" cy="328.5" r="1.55"/><circle cx="308.3" cy="328.5" r="1.55"/><circle cx="329.5" cy="328.5" r="1.55"/><circle cx="136.6" cy="351.8" r="1.55"/><circle cx="157.8" cy="351.8" r="1.55"/><circle cx="179.0" cy="351.8" r="1.55"/><circle cx="200.2" cy="351.8" r="1.55"/><circle cx="221.4" cy="351.8" r="1.55"/><circle cx="242.6" cy="351.8" r="1.55"/><circle cx="263.8" cy="351.8" r="1.55"/><circle cx="285.0" cy="351.8" r="1.55"/><circle cx="306.2" cy="351.8" r="1.55"/><circle cx="327.4" cy="351.8" r="1.55"/><circle cx="134.5" cy="375.0" r="1.55"/><circle cx="155.7" cy="375.0" r="1.55"/><circle cx="176.9" cy="375.0" r="1.55"/><circle cx="198.1" cy="375.0" r="1.55"/><circle cx="219.3" cy="375.0" r="1.55"/><circle cx="240.5" cy="375.0" r="1.55"/><circle cx="261.7" cy="375.0" r="1.55"/><circle cx="282.9" cy="375.0" r="1.55"/><circle cx="304.1" cy="375.0" r="1.55"/><circle cx="325.3" cy="375.0" r="1.55"/><circle cx="132.4" cy="398.2" r="1.55"/><circle cx="153.6" cy="398.2" r="1.55"/><circle cx="174.8" cy="398.2" r="1.55"/><circle cx="196.0" cy="398.2" r="1.55"/><circle cx="217.2" cy="398.2" r="1.55"/><circle cx="238.4" cy="398.2" r="1.55"/><circle cx="259.6" cy="398.2" r="1.55"/><circle cx="280.8" cy="398.2" r="1.55"/><circle cx="302.0" cy="398.2" r="1.55"/><circle cx="323.2" cy="398.2" r="1.55"/><circle cx="161.8" cy="193.7" r="1.55"/><circle cx="183.0" cy="193.7" r="1.55"/><circle cx="204.2" cy="193.7" r="1.55"/><circle cx="225.4" cy="193.7" r="1.55"/><circle cx="246.6" cy="193.7" r="1.55"/><circle cx="267.8" cy="193.7" r="1.55"/><circle cx="289.0" cy="193.7" r="1.55"/><circle cx="310.2" cy="193.7" r="1.55"/><circle cx="331.4" cy="193.7" r="1.55"/><circle cx="352.6" cy="193.7" r="1.55"/><circle cx="159.7" cy="216.9" r="1.55"/><circle cx="180.9" cy="216.9" r="1.55"/><circle cx="202.1" cy="216.9" r="1.55"/><circle cx="223.3" cy="216.9" r="1.55"/><circle cx="244.5" cy="216.9" r="1.55"/><circle cx="265.7" cy="216.9" r="1.55"/><circle cx="286.9" cy="216.9" r="1.55"/><circle cx="308.1" cy="216.9" r="1.55"/><circle cx="329.3" cy="216.9" r="1.55"/><circle cx="350.5" cy="216.9" r="1.55"/><circle cx="157.6" cy="240.2" r="1.55"/><circle cx="178.8" cy="240.2" r="1.55"/><circle cx="200.0" cy="240.2" r="1.55"/><circle cx="221.2" cy="240.2" r="1.55"/><circle cx="242.4" cy="240.2" r="1.55"/><circle cx="263.6" cy="240.2" r="1.55"/><circle cx="284.8" cy="240.2" r="1.55"/><circle cx="306.0" cy="240.2" r="1.55"/><circle cx="327.2" cy="240.2" r="1.55"/><circle cx="348.4" cy="240.2" r="1.55"/><circle cx="155.5" cy="263.4" r="1.55"/><circle cx="176.7" cy="263.4" r="1.55"/><circle cx="197.9" cy="263.4" r="1.55"/><circle cx="219.1" cy="263.4" r="1.55"/><circle cx="240.3" cy="263.4" r="1.55"/><circle cx="261.5" cy="263.4" r="1.55"/><circle cx="282.7" cy="263.4" r="1.55"/><circle cx="303.9" cy="263.4" r="1.55"/><circle cx="325.1" cy="263.4" r="1.55"/><circle cx="346.3" cy="263.4" r="1.55"/><circle cx="153.4" cy="286.7" r="1.55"/><circle cx="174.6" cy="286.7" r="1.55"/><circle cx="195.8" cy="286.7" r="1.55"/><circle cx="217.0" cy="286.7" r="1.55"/><circle cx="238.2" cy="286.7" r="1.55"/><circle cx="259.4" cy="286.7" r="1.55"/><circle cx="280.6" cy="286.7" r="1.55"/><circle cx="301.8" cy="286.7" r="1.55"/><circle cx="323.0" cy="286.7" r="1.55"/><circle cx="344.2" cy="286.7" r="1.55"/><circle cx="151.3" cy="309.9" r="1.55"/><circle cx="172.5" cy="309.9" r="1.55"/><circle cx="193.7" cy="309.9" r="1.55"/><circle cx="214.9" cy="309.9" r="1.55"/><circle cx="236.1" cy="309.9" r="1.55"/><circle cx="257.3" cy="309.9" r="1.55"/><circle cx="278.5" cy="309.9" r="1.55"/><circle cx="299.7" cy="309.9" r="1.55"/><circle cx="320.9" cy="309.9" r="1.55"/><circle cx="342.1" cy="309.9" r="1.55"/><circle cx="149.2" cy="333.2" r="1.55"/><circle cx="170.4" cy="333.2" r="1.55"/><circle cx="191.6" cy="333.2" r="1.55"/><circle cx="212.8" cy="333.2" r="1.55"/><circle cx="234.0" cy="333.2" r="1.55"/><circle cx="255.2" cy="333.2" r="1.55"/><circle cx="276.4" cy="333.2" r="1.55"/><circle cx="297.6" cy="333.2" r="1.55"/><circle cx="318.8" cy="333.2" r="1.55"/><circle cx="340.0" cy="333.2" r="1.55"/><circle cx="147.1" cy="356.4" r="1.55"/><circle cx="168.3" cy="356.4" r="1.55"/><circle cx="189.5" cy="356.4" r="1.55"/><circle cx="210.7" cy="356.4" r="1.55"/><circle cx="231.9" cy="356.4" r="1.55"/><circle cx="253.1" cy="356.4" r="1.55"/><circle cx="274.3" cy="356.4" r="1.55"/><circle cx="295.5" cy="356.4" r="1.55"/><circle cx="316.7" cy="356.4" r="1.55"/><circle cx="337.9" cy="356.4" r="1.55"/><circle cx="145.0" cy="379.7" r="1.55"/><circle cx="166.2" cy="379.7" r="1.55"/><circle cx="187.4" cy="379.7" r="1.55"/><circle cx="208.6" cy="379.7" r="1.55"/><circle cx="229.8" cy="379.7" r="1.55"/><circle cx="251.0" cy="379.7" r="1.55"/><circle cx="272.2" cy="379.7" r="1.55"/><circle cx="293.4" cy="379.7" r="1.55"/><circle cx="314.6" cy="379.7" r="1.55"/><circle cx="335.8" cy="379.7" r="1.55"/><circle cx="142.9" cy="402.9" r="1.55"/><circle cx="164.1" cy="402.9" r="1.55"/><circle cx="185.3" cy="402.9" r="1.55"/><circle cx="206.5" cy="402.9" r="1.55"/><circle cx="227.7" cy="402.9" r="1.55"/><circle cx="248.9" cy="402.9" r="1.55"/><circle cx="270.1" cy="402.9" r="1.55"/><circle cx="291.3" cy="402.9" r="1.55"/><circle cx="312.5" cy="402.9" r="1.55"/><circle cx="333.7" cy="402.9" r="1.55"/><circle cx="172.3" cy="198.4" r="1.55"/><circle cx="193.5" cy="198.4" r="1.55"/><circle cx="214.7" cy="198.4" r="1.55"/><circle cx="235.9" cy="198.4" r="1.55"/><circle cx="257.1" cy="198.4" r="1.55"/><circle cx="278.3" cy="198.4" r="1.55"/><circle cx="299.5" cy="198.4" r="1.55"/><circle cx="320.7" cy="198.4" r="1.55"/><circle cx="341.9" cy="198.4" r="1.55"/><circle cx="363.1" cy="198.4" r="1.55"/><circle cx="170.2" cy="221.7" r="1.55"/><circle cx="191.4" cy="221.7" r="1.55"/><circle cx="212.6" cy="221.7" r="1.55"/><circle cx="233.8" cy="221.7" r="1.55"/><circle cx="255.0" cy="221.7" r="1.55"/><circle cx="276.2" cy="221.7" r="1.55"/><circle cx="297.4" cy="221.7" r="1.55"/><circle cx="318.6" cy="221.7" r="1.55"/><circle cx="339.8" cy="221.7" r="1.55"/><circle cx="361.0" cy="221.7" r="1.55"/><circle cx="168.1" cy="244.9" r="1.55"/><circle cx="189.3" cy="244.9" r="1.55"/><circle cx="210.5" cy="244.9" r="1.55"/><circle cx="231.7" cy="244.9" r="1.55"/><circle cx="252.9" cy="244.9" r="1.55"/><circle cx="274.1" cy="244.9" r="1.55"/><circle cx="295.3" cy="244.9" r="1.55"/><circle cx="316.5" cy="244.9" r="1.55"/><circle cx="337.7" cy="244.9" r="1.55"/><circle cx="358.9" cy="244.9" r="1.55"/><circle cx="166.0" cy="268.1" r="1.55"/><circle cx="187.2" cy="268.1" r="1.55"/><circle cx="208.4" cy="268.1" r="1.55"/><circle cx="229.6" cy="268.1" r="1.55"/><circle cx="250.8" cy="268.1" r="1.55"/><circle cx="272.0" cy="268.1" r="1.55"/><circle cx="293.2" cy="268.1" r="1.55"/><circle cx="314.4" cy="268.1" r="1.55"/><circle cx="335.6" cy="268.1" r="1.55"/><circle cx="356.8" cy="268.1" r="1.55"/><circle cx="163.9" cy="291.4" r="1.55"/><circle cx="185.1" cy="291.4" r="1.55"/><circle cx="206.3" cy="291.4" r="1.55"/><circle cx="227.5" cy="291.4" r="1.55"/><circle cx="248.7" cy="291.4" r="1.55"/><circle cx="269.9" cy="291.4" r="1.55"/><circle cx="291.1" cy="291.4" r="1.55"/><circle cx="312.3" cy="291.4" r="1.55"/><circle cx="333.5" cy="291.4" r="1.55"/><circle cx="354.7" cy="291.4" r="1.55"/><circle cx="161.8" cy="314.6" r="1.55"/><circle cx="183.0" cy="314.6" r="1.55"/><circle cx="204.2" cy="314.6" r="1.55"/><circle cx="225.4" cy="314.6" r="1.55"/><circle cx="246.6" cy="314.6" r="1.55"/><circle cx="267.8" cy="314.6" r="1.55"/><circle cx="289.0" cy="314.6" r="1.55"/><circle cx="310.2" cy="314.6" r="1.55"/><circle cx="331.4" cy="314.6" r="1.55"/><circle cx="352.6" cy="314.6" r="1.55"/><circle cx="159.7" cy="337.9" r="1.55"/><circle cx="180.9" cy="337.9" r="1.55"/><circle cx="202.1" cy="337.9" r="1.55"/><circle cx="223.3" cy="337.9" r="1.55"/><circle cx="244.5" cy="337.9" r="1.55"/><circle cx="265.7" cy="337.9" r="1.55"/><circle cx="286.9" cy="337.9" r="1.55"/><circle cx="308.1" cy="337.9" r="1.55"/><circle cx="329.3" cy="337.9" r="1.55"/><circle cx="350.5" cy="337.9" r="1.55"/><circle cx="157.6" cy="361.1" r="1.55"/><circle cx="178.8" cy="361.1" r="1.55"/><circle cx="200.0" cy="361.1" r="1.55"/><circle cx="221.2" cy="361.1" r="1.55"/><circle cx="242.4" cy="361.1" r="1.55"/><circle cx="263.6" cy="361.1" r="1.55"/><circle cx="284.8" cy="361.1" r="1.55"/><circle cx="306.0" cy="361.1" r="1.55"/><circle cx="327.2" cy="361.1" r="1.55"/><circle cx="348.4" cy="361.1" r="1.55"/><circle cx="155.5" cy="384.4" r="1.55"/><circle cx="176.7" cy="384.4" r="1.55"/><circle cx="197.9" cy="384.4" r="1.55"/><circle cx="219.1" cy="384.4" r="1.55"/><circle cx="240.3" cy="384.4" r="1.55"/><circle cx="261.5" cy="384.4" r="1.55"/><circle cx="282.7" cy="384.4" r="1.55"/><circle cx="303.9" cy="384.4" r="1.55"/><circle cx="325.1" cy="384.4" r="1.55"/><circle cx="346.3" cy="384.4" r="1.55"/><circle cx="153.4" cy="407.6" r="1.55"/><circle cx="174.6" cy="407.6" r="1.55"/><circle cx="195.8" cy="407.6" r="1.55"/><circle cx="217.0" cy="407.6" r="1.55"/><circle cx="238.2" cy="407.6" r="1.55"/><circle cx="259.4" cy="407.6" r="1.55"/><circle cx="280.6" cy="407.6" r="1.55"/><circle cx="301.8" cy="407.6" r="1.55"/><circle cx="323.0" cy="407.6" r="1.55"/><circle cx="344.2" cy="407.6" r="1.55"/><circle cx="182.8" cy="203.1" r="1.55"/><circle cx="204.0" cy="203.1" r="1.55"/><circle cx="225.2" cy="203.1" r="1.55"/><circle cx="246.4" cy="203.1" r="1.55"/><circle cx="267.6" cy="203.1" r="1.55"/><circle cx="288.8" cy="203.1" r="1.55"/><circle cx="310.0" cy="203.1" r="1.55"/><circle cx="331.2" cy="203.1" r="1.55"/><circle cx="352.4" cy="203.1" r="1.55"/><circle cx="373.6" cy="203.1" r="1.55"/><circle cx="180.7" cy="226.3" r="1.55"/><circle cx="201.9" cy="226.3" r="1.55"/><circle cx="223.1" cy="226.3" r="1.55"/><circle cx="244.3" cy="226.3" r="1.55"/><circle cx="265.5" cy="226.3" r="1.55"/><circle cx="286.7" cy="226.3" r="1.55"/><circle cx="307.9" cy="226.3" r="1.55"/><circle cx="329.1" cy="226.3" r="1.55"/><circle cx="350.3" cy="226.3" r="1.55"/><circle cx="371.5" cy="226.3" r="1.55"/><circle cx="178.6" cy="249.6" r="1.55"/><circle cx="199.8" cy="249.6" r="1.55"/><circle cx="221.0" cy="249.6" r="1.55"/><circle cx="242.2" cy="249.6" r="1.55"/><circle cx="263.4" cy="249.6" r="1.55"/><circle cx="284.6" cy="249.6" r="1.55"/><circle cx="305.8" cy="249.6" r="1.55"/><circle cx="327.0" cy="249.6" r="1.55"/><circle cx="348.2" cy="249.6" r="1.55"/><circle cx="369.4" cy="249.6" r="1.55"/><circle cx="176.5" cy="272.9" r="1.55"/><circle cx="197.7" cy="272.9" r="1.55"/><circle cx="218.9" cy="272.9" r="1.55"/><circle cx="240.1" cy="272.9" r="1.55"/><circle cx="261.3" cy="272.9" r="1.55"/><circle cx="282.5" cy="272.9" r="1.55"/><circle cx="303.7" cy="272.9" r="1.55"/><circle cx="324.9" cy="272.9" r="1.55"/><circle cx="346.1" cy="272.9" r="1.55"/><circle cx="367.3" cy="272.9" r="1.55"/><circle cx="174.4" cy="296.1" r="1.55"/><circle cx="195.6" cy="296.1" r="1.55"/><circle cx="216.8" cy="296.1" r="1.55"/><circle cx="238.0" cy="296.1" r="1.55"/><circle cx="259.2" cy="296.1" r="1.55"/><circle cx="280.4" cy="296.1" r="1.55"/><circle cx="301.6" cy="296.1" r="1.55"/><circle cx="322.8" cy="296.1" r="1.55"/><circle cx="344.0" cy="296.1" r="1.55"/><circle cx="365.2" cy="296.1" r="1.55"/><circle cx="172.3" cy="319.4" r="1.55"/><circle cx="193.5" cy="319.4" r="1.55"/><circle cx="214.7" cy="319.4" r="1.55"/><circle cx="235.9" cy="319.4" r="1.55"/><circle cx="257.1" cy="319.4" r="1.55"/><circle cx="278.3" cy="319.4" r="1.55"/><circle cx="299.5" cy="319.4" r="1.55"/><circle cx="320.7" cy="319.4" r="1.55"/><circle cx="341.9" cy="319.4" r="1.55"/><circle cx="363.1" cy="319.4" r="1.55"/><circle cx="170.2" cy="342.6" r="1.55"/><circle cx="191.4" cy="342.6" r="1.55"/><circle cx="212.6" cy="342.6" r="1.55"/><circle cx="233.8" cy="342.6" r="1.55"/><circle cx="255.0" cy="342.6" r="1.55"/><circle cx="276.2" cy="342.6" r="1.55"/><circle cx="297.4" cy="342.6" r="1.55"/><circle cx="318.6" cy="342.6" r="1.55"/><circle cx="339.8" cy="342.6" r="1.55"/><circle cx="361.0" cy="342.6" r="1.55"/><circle cx="168.1" cy="365.9" r="1.55"/><circle cx="189.3" cy="365.9" r="1.55"/><circle cx="210.5" cy="365.9" r="1.55"/><circle cx="231.7" cy="365.9" r="1.55"/><circle cx="252.9" cy="365.9" r="1.55"/><circle cx="274.1" cy="365.9" r="1.55"/><circle cx="295.3" cy="365.9" r="1.55"/><circle cx="316.5" cy="365.9" r="1.55"/><circle cx="337.7" cy="365.9" r="1.55"/><circle cx="358.9" cy="365.9" r="1.55"/><circle cx="166.0" cy="389.1" r="1.55"/><circle cx="187.2" cy="389.1" r="1.55"/><circle cx="208.4" cy="389.1" r="1.55"/><circle cx="229.6" cy="389.1" r="1.55"/><circle cx="250.8" cy="389.1" r="1.55"/><circle cx="272.0" cy="389.1" r="1.55"/><circle cx="293.2" cy="389.1" r="1.55"/><circle cx="314.4" cy="389.1" r="1.55"/><circle cx="335.6" cy="389.1" r="1.55"/><circle cx="356.8" cy="389.1" r="1.55"/><circle cx="163.9" cy="412.3" r="1.55"/><circle cx="185.1" cy="412.3" r="1.55"/><circle cx="206.3" cy="412.3" r="1.55"/><circle cx="227.5" cy="412.3" r="1.55"/><circle cx="248.7" cy="412.3" r="1.55"/><circle cx="269.9" cy="412.3" r="1.55"/><circle cx="291.1" cy="412.3" r="1.55"/><circle cx="312.3" cy="412.3" r="1.55"/><circle cx="333.5" cy="412.3" r="1.55"/><circle cx="354.7" cy="412.3" r="1.55"/></g><g stroke-width="1.6" fill="none" stroke-linecap="round"><path d="M53.49999999999994 134.00000000000003 L93.19999999999999 134.00000000000003 M87.19999999999999 130.4 L93.69999999999999 134.00000000000003 L87.19999999999999 137.9" stroke="#ee1111"/><path d="M53.49999999999994 134.00000000000003 L90.19999999999999 150.4 M83.19999999999999 150.9 L90.69999999999999 150.4 L86.19999999999999 144.4" stroke="#1111ee"/><path d="M53.49999999999994 134.00000000000003 L49.69999999999999 173.4 M46.19999999999999 166.4 L49.69999999999999 173.9 L53.19999999999999 167.4" stroke="#11dd11"/></g></svg>
<div style="position:absolute;left:0;top:0;width:509.7px;height:426.2px;border:1px solid #3c3c3c;border-radius:7px;box-sizing:border-box;"></div>
</div>
</div></body></html>
